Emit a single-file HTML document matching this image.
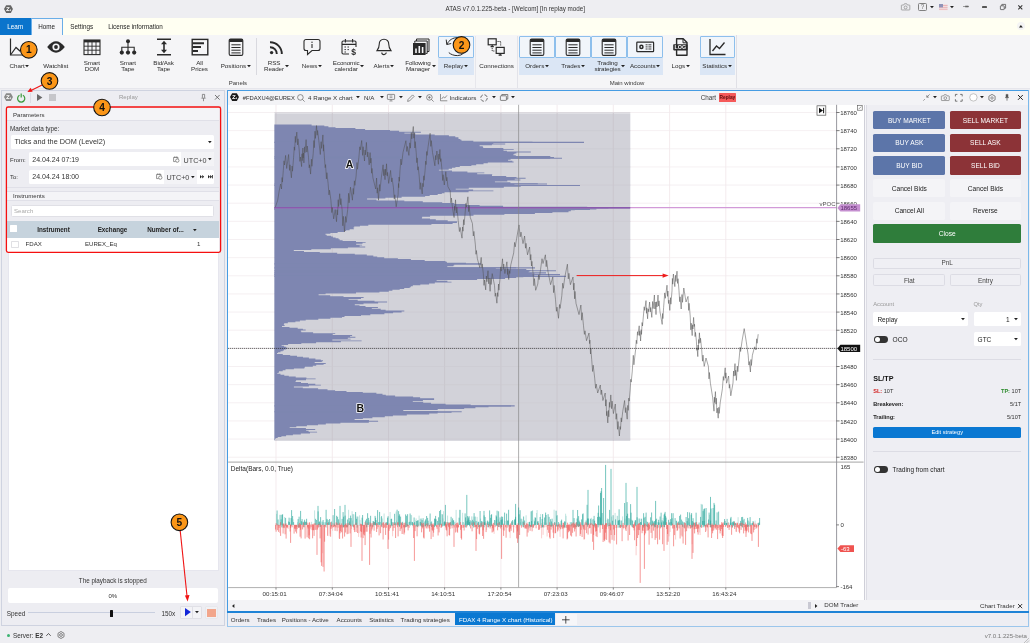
<!DOCTYPE html><html><head><meta charset="utf-8"><title>ATAS</title><style>*{box-sizing:border-box;margin:0;padding:0}
html,body{width:1030px;height:643px;overflow:hidden;background:#eeeef2;font-family:"Liberation Sans",sans-serif;font-size:6.2px;color:#222}
.a{position:absolute}
svg{overflow:visible}
</style></head><body><div id="root" style="position:absolute;left:0;top:0;width:1030px;height:643px;will-change:transform">
<div class="a " style="left:0.0px;top:0.0px;width:1030.0px;height:17.5px;background:#eeeef2"></div>
<svg class="a" style="left:4.12px;top:4.71px;" width="8.969999999999999" height="8.19" viewBox="0 0 9.2 8.4"><path d="M0 4.2L2.2 0.3H7L9.2 4.2L7 8.1H2.2Z" fill="#666"/><circle cx="4.6" cy="4.2" r="2.9" fill="#666"/><path d="M2.5 2.7h2.9l-2.9 3h2.9" fill="none" stroke="#fff" stroke-width="0.9"/><path d="M5.6 5.9l0.9-1.9l0.9 1.9z" fill="#fff"/></svg>
<div class="a" style="top:5.49px;height:8.82px;line-height:8.82px;font-size:6.3px;color:#333;white-space:pre;left:365.30px;width:300px;text-align:center;">ATAS v7.0.1.225-beta - [Welcom] [In replay mode]</div>
<svg class="a" style="left:900.70px;top:3.32px;" width="9.200000000000001" height="7.36" viewBox="0 0 10 8"><path d="M1 2.2 h2 l0.8 -1.4 h2.4 l0.8 1.4 h2 a0.6 0.6 0 0 1 0.6 0.6 v4.2 a0.6 0.6 0 0 1 -0.6 0.6 h-8 a0.6 0.6 0 0 1 -0.6 -0.6 v-4.2 a0.6 0.6 0 0 1 0.6 -0.6z" fill="none" stroke="#808080" stroke-width="0.7"/><circle cx="5" cy="4.8" r="1.6" fill="none" stroke="#808080" stroke-width="0.7"/></svg>
<div class="a " style="left:918.4px;top:2.6px;width:8.4px;height:8.4px;border:0.8px solid #808080;border-radius:1.4px"></div>
<div class="a" style="top:2.59px;height:8.82px;line-height:8.82px;font-size:6.3px;color:#666;white-space:pre;left:917.60px;width:10px;text-align:center;">?</div>
<svg class="a" style="left:929.54px;top:5.75px;" width="3.9099999999999997" height="2.3" viewBox="0 0 3.9099999999999997 2.3"><path d="M0 0 h3.9099999999999997 l-1.9549999999999998 2.3z" fill="#222"/></svg>
<svg class="a" style="left:939.00px;top:3.60px;" width="8.6" height="6.6" viewBox="0 0 8.6 6.6"><rect width="8.6" height="6.6" fill="#f3e9ea"/><path d="M0 1.4h8.6M0 3.3h8.6M0 5.2h8.6" stroke="#e6a8ae" stroke-width="0.9"/><rect width="4" height="3.4" fill="#8f93b8"/></svg>
<svg class="a" style="left:950.04px;top:5.75px;" width="3.9099999999999997" height="2.3" viewBox="0 0 3.9099999999999997 2.3"><path d="M0 0 h3.9099999999999997 l-1.9549999999999998 2.3z" fill="#222"/></svg>
<svg class="a" style="left:963.40px;top:5.30px;" width="6" height="3" viewBox="0 0 6 3"><path d="M0 1.5 h6" stroke="#888" stroke-width="0.8"/><path d="M2.2 1.5h3.2" stroke="#666" stroke-width="1.6"/></svg>
<div class="a " style="left:981.9px;top:6.0px;width:5.6px;height:1.6px;background:#555;border-radius:0.4px"></div>
<svg class="a" style="left:1000.00px;top:3.90px;" width="6" height="6" viewBox="0 0 6 6"><rect x="0.4" y="1.8" width="3.8" height="3.8" rx="0.4" fill="none" stroke="#555" stroke-width="0.8"/><path d="M1.8 1.8 v-1.4 h3.8 v3.8 h-1.4" fill="none" stroke="#555" stroke-width="0.8"/></svg>
<svg class="a" style="left:1018.40px;top:4.50px;" width="4.6" height="4.6" viewBox="0 0 4.6 4.6"><path d="M0.3 0.3 L4.3 4.3 M4.3 0.3 L0.3 4.3" stroke="#333" stroke-width="1.05"/></svg>
<div class="a " style="left:0.0px;top:17.5px;width:1030.0px;height:17.3px;background:#fffff2"></div>
<div class="a " style="left:0.0px;top:17.5px;width:30.7px;height:17.3px;background:#0a74cc"></div>
<div class="a" style="top:23.09px;height:8.82px;line-height:8.82px;font-size:6.3px;color:#fff;white-space:pre;left:-4.70px;width:40px;text-align:center;">Learn</div>
<div class="a " style="left:31.0px;top:17.8px;width:32.0px;height:17.2px;background:#f6f6f8;border:0.8px solid #6aaee8;border-bottom:none"></div>
<div class="a" style="top:23.29px;height:8.82px;line-height:8.82px;font-size:6.3px;color:#222;white-space:pre;left:26.60px;width:40px;text-align:center;">Home</div>
<div class="a" style="top:23.29px;height:8.82px;line-height:8.82px;font-size:6.3px;color:#222;white-space:pre;left:70.30px;">Settings</div>
<div class="a" style="top:23.29px;height:8.82px;line-height:8.82px;font-size:6.3px;color:#222;white-space:pre;left:108.20px;">License information</div>
<div class="a " style="left:1016.8px;top:21.8px;width:8.6px;height:8.6px;background:#f4f4f4;border-radius:50%"></div>
<svg class="a" style="left:1019.20px;top:24.80px;" width="3.8" height="2.4" viewBox="0 0 3.8 2.4"><path d="M0 2.4 h3.8 l-1.9 -2.4z" fill="#222"/></svg>
<div class="a " style="left:0.0px;top:34.8px;width:1030.0px;height:53.6px;background:#f5f5f7"></div>
<div class="a " style="left:0.0px;top:88.2px;width:1030.0px;height:0.8px;background:#e6e6ec"></div>
<div class="a " style="left:255.5px;top:38.0px;width:0.9px;height:37.0px;background:#d9d9df"></div>
<div class="a " style="left:475.0px;top:36.0px;width:0.9px;height:52.0px;background:#e7e7ec"></div>
<div class="a " style="left:517.0px;top:36.0px;width:0.9px;height:52.0px;background:#e3e3e9"></div>
<div class="a " style="left:736.4px;top:35.0px;width:0.9px;height:53.0px;background:#e0e0e6"></div>
<div class="a" style="top:78.70px;height:8.40px;line-height:8.40px;font-size:6px;color:#3a3a3a;white-space:pre;left:207.90px;width:60px;text-align:center;">Panels</div>
<div class="a" style="top:78.70px;height:8.40px;line-height:8.40px;font-size:6px;color:#3a3a3a;white-space:pre;left:587.00px;width:80px;text-align:center;">Main window</div>
<div class="a " style="left:438.4px;top:57.6px;width:35.6px;height:17.8px;background:#dbe6f5"></div>
<div class="a " style="left:438.4px;top:36.4px;width:35.6px;height:21.4px;background:#f1f5fa;border:1px solid #8dbfec;border-radius:1px"></div>
<div class="a " style="left:519.4px;top:57.6px;width:35.5px;height:17.8px;background:#dbe6f5"></div>
<div class="a " style="left:519.4px;top:36.4px;width:35.5px;height:21.4px;background:#f1f5fa;border:1px solid #8dbfec;border-radius:1px"></div>
<div class="a " style="left:554.9px;top:57.6px;width:36.0px;height:17.8px;background:#dbe6f5"></div>
<div class="a " style="left:554.9px;top:36.4px;width:36.0px;height:21.4px;background:#f1f5fa;border:1px solid #8dbfec;border-radius:1px"></div>
<div class="a " style="left:590.9px;top:57.6px;width:36.1px;height:17.8px;background:#dbe6f5"></div>
<div class="a " style="left:590.9px;top:36.4px;width:36.1px;height:21.4px;background:#f1f5fa;border:1px solid #8dbfec;border-radius:1px"></div>
<div class="a " style="left:627.0px;top:57.6px;width:35.9px;height:17.8px;background:#dbe6f5"></div>
<div class="a " style="left:627.0px;top:36.4px;width:35.9px;height:21.4px;background:#f1f5fa;border:1px solid #8dbfec;border-radius:1px"></div>
<div class="a " style="left:699.5px;top:57.6px;width:35.4px;height:17.8px;background:#dbe6f5"></div>
<div class="a " style="left:699.5px;top:36.4px;width:35.4px;height:21.4px;background:#f1f5fa;border:1px solid #8dbfec;border-radius:1px"></div>
<svg class="a" style="left:9.00px;top:37.60px;" width="18" height="18" viewBox="0 0 18 18"><path d="M1.5 0.5 V17 H18" fill="none" stroke="#2a2a2a" stroke-width="1.2"/><path d="M1.5 17 L7 9.5 L11 13 L17 5" fill="none" stroke="#2a2a2a" stroke-width="1.2"/></svg>
<div class="a" style="top:61.92px;height:8.75px;line-height:8.75px;font-size:6.25px;color:#2c2c2c;white-space:pre;left:-10.60px;width:60px;text-align:center;">Chart<svg width="4" height="2.3" viewBox="0 0 3.4 2" style="display:inline-block;vertical-align:middle;margin-left:0.5px;position:relative;top:-0.2px"><path d="M0 0h3.4l-1.7 2z" fill="#222"/></svg></div>
<svg class="a" style="left:47.00px;top:37.60px;" width="18" height="18" viewBox="0 0 18 18"><path d="M0.2 9 Q9 -2.4 17.8 9 Q9 20.4 0.2 9Z" fill="#2a2a2a"/><circle cx="9" cy="9" r="3.6" fill="#f5f5f7"/><circle cx="9" cy="9" r="1.9" fill="#2a2a2a"/></svg>
<div class="a" style="top:61.92px;height:8.75px;line-height:8.75px;font-size:6.25px;color:#2c2c2c;white-space:pre;left:25.80px;width:60px;text-align:center;">Watchlist</div>
<svg class="a" style="left:83.00px;top:37.60px;" width="18" height="18" viewBox="0 0 18 18"><rect x="1" y="2" width="16" height="14.6" fill="none" stroke="#2a2a2a" stroke-width="1.1"/><rect x="1" y="2" width="16" height="2.4" fill="#2a2a2a"/><path d="M1 8.2h16M1 12.2h16M5 4v12.6M9 4v12.6M13 4v12.6" stroke="#2a2a2a" stroke-width="0.9"/></svg>
<div class="a" style="top:58.62px;height:8.75px;line-height:8.75px;font-size:6.25px;color:#2c2c2c;white-space:pre;left:61.90px;width:60px;text-align:center;letter-spacing:-0.1px;">Smart</div>
<div class="a" style="top:64.92px;height:8.75px;line-height:8.75px;font-size:6.25px;color:#2c2c2c;white-space:pre;left:61.90px;width:60px;text-align:center;letter-spacing:-0.1px;">DOM</div>
<svg class="a" style="left:119.00px;top:37.60px;" width="18" height="18" viewBox="0 0 18 18"><circle cx="9" cy="3.2" r="2" fill="#2a2a2a"/><path d="M9 5v9M2.8 13V9.2h12.4V13" fill="none" stroke="#2a2a2a" stroke-width="1.1"/><circle cx="2.8" cy="14.6" r="2.1" fill="#2a2a2a"/><circle cx="9" cy="14.6" r="2.1" fill="#2a2a2a"/><circle cx="15.2" cy="14.6" r="2.1" fill="#2a2a2a"/></svg>
<div class="a" style="top:58.62px;height:8.75px;line-height:8.75px;font-size:6.25px;color:#2c2c2c;white-space:pre;left:97.80px;width:60px;text-align:center;letter-spacing:-0.1px;">Smart</div>
<div class="a" style="top:64.92px;height:8.75px;line-height:8.75px;font-size:6.25px;color:#2c2c2c;white-space:pre;left:97.80px;width:60px;text-align:center;letter-spacing:-0.1px;">Tape</div>
<svg class="a" style="left:154.60px;top:37.60px;" width="18" height="18" viewBox="0 0 18 18"><path d="M2 1.2h14M2 16.8h14" stroke="#2a2a2a" stroke-width="1.6"/><path d="M9 4.5v9" stroke="#2a2a2a" stroke-width="1.6"/><path d="M9 2.8l3 3.4h-6zM9 15.2l3-3.4h-6z" fill="#2a2a2a"/></svg>
<div class="a" style="top:58.62px;height:8.75px;line-height:8.75px;font-size:6.25px;color:#2c2c2c;white-space:pre;left:133.60px;width:60px;text-align:center;letter-spacing:-0.1px;">Bid/Ask</div>
<div class="a" style="top:64.92px;height:8.75px;line-height:8.75px;font-size:6.25px;color:#2c2c2c;white-space:pre;left:133.60px;width:60px;text-align:center;letter-spacing:-0.1px;">Tape</div>
<svg class="a" style="left:190.50px;top:37.60px;" width="18" height="18" viewBox="0 0 18 18"><rect x="1.2" y="1.4" width="15.6" height="15.4" fill="none" stroke="#2a2a2a" stroke-width="1.4"/><path d="M1.6 5.2h11.4M1.6 9.1h8.4M1.6 13h5.4" stroke="#2a2a2a" stroke-width="2"/></svg>
<div class="a" style="top:58.62px;height:8.75px;line-height:8.75px;font-size:6.25px;color:#2c2c2c;white-space:pre;left:169.50px;width:60px;text-align:center;letter-spacing:-0.1px;">All</div>
<div class="a" style="top:64.92px;height:8.75px;line-height:8.75px;font-size:6.25px;color:#2c2c2c;white-space:pre;left:169.50px;width:60px;text-align:center;letter-spacing:-0.1px;">Prices</div>
<svg class="a" style="left:227.00px;top:37.60px;" width="18" height="18" viewBox="0 0 18 18"><rect x="2.2" y="1" width="13.6" height="16.4" rx="1.4" fill="none" stroke="#2a2a2a" stroke-width="1.1"/><path d="M2.2 2.4 a1.4 1.4 0 0 1 1.4 -1.4 h10.8 a1.4 1.4 0 0 1 1.4 1.4 v1.6 h-13.6z" fill="#2a2a2a"/><path d="M4.4 6.8h9.2M4.4 9.5h9.2M4.4 12.2h9.2M4.4 14.9h9.2" stroke="#2a2a2a" stroke-width="1"/></svg>
<div class="a" style="top:61.92px;height:8.75px;line-height:8.75px;font-size:6.25px;color:#2c2c2c;white-space:pre;left:205.60px;width:60px;text-align:center;">Positions<svg width="4" height="2.3" viewBox="0 0 3.4 2" style="display:inline-block;vertical-align:middle;margin-left:0.5px;position:relative;top:-0.2px"><path d="M0 0h3.4l-1.7 2z" fill="#222"/></svg></div>
<svg class="a" style="left:267.00px;top:37.60px;" width="18" height="18" viewBox="0 0 18 18"><circle cx="4.6" cy="14.6" r="1.7" fill="#2a2a2a"/><path d="M3 9.2 a6.6 6.6 0 0 1 6.8 6.8 M3 4.2 a11.6 11.6 0 0 1 11.8 11.8" fill="none" stroke="#2a2a2a" stroke-width="1.9"/></svg>
<div class="a" style="top:58.62px;height:8.75px;line-height:8.75px;font-size:6.25px;color:#2c2c2c;white-space:pre;left:244.00px;width:60px;text-align:center;letter-spacing:-0.1px;">RSS</div>
<div class="a" style="top:64.92px;height:8.75px;line-height:8.75px;font-size:6.25px;color:#2c2c2c;white-space:pre;left:244.00px;width:60px;text-align:center;letter-spacing:-0.1px;">Reader</div>
<svg class="a" style="left:303.40px;top:37.60px;" width="18" height="18" viewBox="0 0 18 18"><path d="M3 1.5h12a2 2 0 0 1 2 2v7a2 2 0 0 1-2 2H9l-4.5 4v-4H3a2 2 0 0 1-2-2v-7a2 2 0 0 1 2-2z" fill="none" stroke="#2a2a2a" stroke-width="1.1"/><path d="M9 6v4" stroke="#2a2a2a" stroke-width="1.1"/><circle cx="9" cy="4.2" r="0.7" fill="#2a2a2a"/></svg>
<div class="a" style="top:61.92px;height:8.75px;line-height:8.75px;font-size:6.25px;color:#2c2c2c;white-space:pre;left:281.90px;width:60px;text-align:center;">News<svg width="4" height="2.3" viewBox="0 0 3.4 2" style="display:inline-block;vertical-align:middle;margin-left:0.5px;position:relative;top:-0.2px"><path d="M0 0h3.4l-1.7 2z" fill="#222"/></svg></div>
<svg class="a" style="left:339.50px;top:37.60px;" width="18" height="18" viewBox="0 0 18 18"><path d="M16 9V4.2a1.2 1.2 0 0 0-1.2-1.2H3.2A1.2 1.2 0 0 0 2 4.2v10.600000000000001a1.2 1.2 0 0 0 1.2 1.2H9" fill="none" stroke="#2a2a2a" stroke-width="1.1"/><path d="M2 6.4h14M5.4 1v3.4M12.6 1v3.4" stroke="#2a2a2a" stroke-width="1.1"/><path d="M4.5 9h1.4M7.5 9h1.4M4.5 11.600000000000001h1.4M7.5 11.600000000000001h1.4M4.5 14h1.4" stroke="#2a2a2a" stroke-width="1"/><text x="13.6" y="16.6" font-size="8.5" font-weight="bold" text-anchor="middle" fill="#2a2a2a" font-family="Liberation Sans, sans-serif">$</text></svg>
<div class="a" style="top:58.62px;height:8.75px;line-height:8.75px;font-size:6.25px;color:#2c2c2c;white-space:pre;left:316.20px;width:60px;text-align:center;letter-spacing:-0.1px;">Economic</div>
<div class="a" style="top:64.92px;height:8.75px;line-height:8.75px;font-size:6.25px;color:#2c2c2c;white-space:pre;left:316.20px;width:60px;text-align:center;letter-spacing:-0.1px;">calendar</div>
<svg class="a" style="left:374.80px;top:37.60px;" width="18" height="18" viewBox="0 0 18 18"><path d="M9 1.2c-3 0-4.800000000000001 2.2-4.800000000000001 5.2 0 3.4-1 4.6-2.2 6.2h14c-1.2-1.6-2.2-2.8-2.2-6.2 0-3-1.8-5.2-4.800000000000001-5.2z" fill="none" stroke="#2a2a2a" stroke-width="1.1"/><path d="M6.8 14.4a2.2 2.2 0 0 0 4.4 0" fill="none" stroke="#2a2a2a" stroke-width="1.1"/></svg>
<div class="a" style="top:61.92px;height:8.75px;line-height:8.75px;font-size:6.25px;color:#2c2c2c;white-space:pre;left:353.80px;width:60px;text-align:center;">Alerts<svg width="4" height="2.3" viewBox="0 0 3.4 2" style="display:inline-block;vertical-align:middle;margin-left:0.5px;position:relative;top:-0.2px"><path d="M0 0h3.4l-1.7 2z" fill="#222"/></svg></div>
<svg class="a" style="left:411.50px;top:37.60px;" width="18" height="18" viewBox="0 0 18 18"><path d="M4.5 3V1h12.5v12.5h-2" fill="none" stroke="#2a2a2a" stroke-width="1"/><path d="M2.800000000000001 4.800000000000001V3h12.4v12.4h-1.8" fill="none" stroke="#2a2a2a" stroke-width="1"/><rect x="1" y="5" width="12.6" height="12" fill="#2a2a2a"/><path d="M4 15v-4.5M7.3 15V8M10.600000000000001 15v-6" stroke="#f5f5f7" stroke-width="1.6"/></svg>
<div class="a" style="top:58.62px;height:8.75px;line-height:8.75px;font-size:6.25px;color:#2c2c2c;white-space:pre;left:388.00px;width:60px;text-align:center;letter-spacing:-0.1px;">Following</div>
<div class="a" style="top:64.92px;height:8.75px;line-height:8.75px;font-size:6.25px;color:#2c2c2c;white-space:pre;left:388.00px;width:60px;text-align:center;letter-spacing:-0.1px;">Manager</div>
<svg class="a" style="left:447.50px;top:37.60px;" width="18" height="18" viewBox="0 0 18 18"></svg>
<div class="a" style="top:61.92px;height:8.75px;line-height:8.75px;font-size:6.25px;color:#2c2c2c;white-space:pre;left:425.80px;width:60px;text-align:center;">Replay<svg width="4" height="2.3" viewBox="0 0 3.4 2" style="display:inline-block;vertical-align:middle;margin-left:0.5px;position:relative;top:-0.2px"><path d="M0 0h3.4l-1.7 2z" fill="#222"/></svg></div>
<svg class="a" style="left:487.20px;top:37.60px;" width="18" height="18" viewBox="0 0 18 18"><rect x="1.2" y="0.8" width="8" height="6" fill="none" stroke="#2a2a2a" stroke-width="1.2"/><path d="M3.6 8.6h3.2M5.2 6.8v1.8" stroke="#2a2a2a" stroke-width="1.2"/><rect x="9.2" y="9.4" width="8" height="6" fill="none" stroke="#2a2a2a" stroke-width="1.2"/><path d="M11.6 17.2h3.2M13.2 15.4v1.8" stroke="#2a2a2a" stroke-width="1.2"/><path d="M10.5 3.5h3.2v4.6M5.2 10v3h2.6" fill="none" stroke="#2a2a2a" stroke-width="0.9" stroke-dasharray="1.2 0.8"/></svg>
<div class="a" style="top:61.92px;height:8.75px;line-height:8.75px;font-size:6.25px;color:#2c2c2c;white-space:pre;left:466.60px;width:60px;text-align:center;">Connections</div>
<svg class="a" style="left:528.00px;top:37.60px;" width="18" height="18" viewBox="0 0 18 18"><rect x="2.2" y="1" width="13.6" height="16.4" rx="1.4" fill="none" stroke="#2a2a2a" stroke-width="1.1"/><path d="M2.2 2.4 a1.4 1.4 0 0 1 1.4 -1.4 h10.8 a1.4 1.4 0 0 1 1.4 1.4 v1.6 h-13.6z" fill="#2a2a2a"/><path d="M4.4 6.8h9.2M4.4 9.5h9.2M4.4 12.2h9.2M4.4 14.9h9.2" stroke="#2a2a2a" stroke-width="1"/></svg>
<div class="a" style="top:61.92px;height:8.75px;line-height:8.75px;font-size:6.25px;color:#2c2c2c;white-space:pre;left:507.00px;width:60px;text-align:center;">Orders<svg width="4" height="2.3" viewBox="0 0 3.4 2" style="display:inline-block;vertical-align:middle;margin-left:0.5px;position:relative;top:-0.2px"><path d="M0 0h3.4l-1.7 2z" fill="#222"/></svg></div>
<svg class="a" style="left:564.00px;top:37.60px;" width="18" height="18" viewBox="0 0 18 18"><rect x="2.2" y="1" width="13.6" height="16.4" rx="1.4" fill="none" stroke="#2a2a2a" stroke-width="1.1"/><path d="M2.2 2.4 a1.4 1.4 0 0 1 1.4 -1.4 h10.8 a1.4 1.4 0 0 1 1.4 1.4 v1.6 h-13.6z" fill="#2a2a2a"/><path d="M4.4 6.8h9.2M4.4 9.5h9.2M4.4 12.2h9.2M4.4 14.9h9.2" stroke="#2a2a2a" stroke-width="1"/></svg>
<div class="a" style="top:61.92px;height:8.75px;line-height:8.75px;font-size:6.25px;color:#2c2c2c;white-space:pre;left:543.00px;width:60px;text-align:center;">Trades<svg width="4" height="2.3" viewBox="0 0 3.4 2" style="display:inline-block;vertical-align:middle;margin-left:0.5px;position:relative;top:-0.2px"><path d="M0 0h3.4l-1.7 2z" fill="#222"/></svg></div>
<svg class="a" style="left:600.00px;top:37.60px;" width="18" height="18" viewBox="0 0 18 18"><rect x="2.2" y="1" width="13.6" height="16.4" rx="1.4" fill="none" stroke="#2a2a2a" stroke-width="1.1"/><path d="M2.2 2.4 a1.4 1.4 0 0 1 1.4 -1.4 h10.8 a1.4 1.4 0 0 1 1.4 1.4 v1.6 h-13.6z" fill="#2a2a2a"/><path d="M4.4 6.8h9.2M4.4 9.5h9.2M4.4 12.2h9.2M4.4 14.9h9.2" stroke="#2a2a2a" stroke-width="1"/></svg>
<div class="a" style="top:58.62px;height:8.75px;line-height:8.75px;font-size:6.25px;color:#2c2c2c;white-space:pre;left:577.50px;width:60px;text-align:center;letter-spacing:-0.1px;">Trading</div>
<div class="a" style="top:64.92px;height:8.75px;line-height:8.75px;font-size:6.25px;color:#2c2c2c;white-space:pre;left:577.50px;width:60px;text-align:center;letter-spacing:-0.1px;">strategies</div>
<svg class="a" style="left:636.00px;top:37.60px;" width="18" height="18" viewBox="0 0 18 18"><rect x="0.8" y="4.2" width="16.8" height="9.4" rx="0.6" fill="none" stroke="#2a2a2a" stroke-width="1.2"/><circle cx="5.4" cy="8.9" r="2.3" fill="#2a2a2a"/><circle cx="5.4" cy="8.9" r="0.8" fill="#f1f5fa"/><path d="M9.6 6.8h2M12.4 6.8h3M9.6 8.9h2M12.4 8.9h3M9.6 11h2M12.4 11h3" stroke="#2a2a2a" stroke-width="0.9"/></svg>
<div class="a" style="top:61.92px;height:8.75px;line-height:8.75px;font-size:6.25px;color:#2c2c2c;white-space:pre;left:615.00px;width:60px;text-align:center;">Accounts<svg width="4" height="2.3" viewBox="0 0 3.4 2" style="display:inline-block;vertical-align:middle;margin-left:0.5px;position:relative;top:-0.2px"><path d="M0 0h3.4l-1.7 2z" fill="#222"/></svg></div>
<svg class="a" style="left:671.60px;top:37.60px;" width="18" height="18" viewBox="0 0 18 18"><path d="M4.6 0.8h6.6l3.8 3.8v12.6H4.6z" fill="#f5f5f7" stroke="#2a2a2a" stroke-width="1.4" stroke-linejoin="round"/><path d="M11 0.8v4h4" fill="none" stroke="#2a2a2a" stroke-width="1"/><rect x="1.2" y="6.2" width="14.4" height="6.2" rx="0.8" fill="#2a2a2a"/><text x="8.4" y="11.2" font-size="5.4" font-weight="bold" text-anchor="middle" fill="#f5f5f7" font-family="Liberation Sans, sans-serif">LOG</text></svg>
<div class="a" style="top:61.92px;height:8.75px;line-height:8.75px;font-size:6.25px;color:#2c2c2c;white-space:pre;left:650.60px;width:60px;text-align:center;">Logs<svg width="4" height="2.3" viewBox="0 0 3.4 2" style="display:inline-block;vertical-align:middle;margin-left:0.5px;position:relative;top:-0.2px"><path d="M0 0h3.4l-1.7 2z" fill="#222"/></svg></div>
<svg class="a" style="left:708.00px;top:37.60px;" width="18" height="18" viewBox="0 0 18 18"><path d="M2 1V16.5H17.5" fill="none" stroke="#2a2a2a" stroke-width="1.3"/><path d="M4.5 13l4-5 3 2.5 5-6" fill="none" stroke="#2a2a2a" stroke-width="1.3"/></svg>
<div class="a" style="top:61.92px;height:8.75px;line-height:8.75px;font-size:6.25px;color:#2c2c2c;white-space:pre;left:687.00px;width:60px;text-align:center;">Statistics<svg width="4" height="2.3" viewBox="0 0 3.4 2" style="display:inline-block;vertical-align:middle;margin-left:0.5px;position:relative;top:-0.2px"><path d="M0 0h3.4l-1.7 2z" fill="#222"/></svg></div>
<svg class="a" style="left:284.70px;top:65.20px;" width="4" height="2.3" viewBox="0 0 4 2.3"><path d="M0 0h4l-2 2.3z" fill="#222"/></svg>
<svg class="a" style="left:359.90px;top:65.20px;" width="4" height="2.3" viewBox="0 0 4 2.3"><path d="M0 0h4l-2 2.3z" fill="#222"/></svg>
<svg class="a" style="left:432.40px;top:65.20px;" width="4" height="2.3" viewBox="0 0 4 2.3"><path d="M0 0h4l-2 2.3z" fill="#222"/></svg>
<svg class="a" style="left:621.20px;top:65.20px;" width="4" height="2.3" viewBox="0 0 4 2.3"><path d="M0 0h4l-2 2.3z" fill="#222"/></svg>
<svg class="a" style="left:0.00px;top:0.00px;" width="1030" height="643" viewBox="0 0 1030 643"><path d="M446.8 44.4C449 40 453 37.6 457.5 37.6A9 9 0 0 1 457.5 55.6C454 55.6 451 54.6 448.8 52.6" fill="none" stroke="#2a2a2a" stroke-width="1"/><path d="M446.2 39.6L446.8 44.5L451.2 43.5" fill="none" stroke="#2a2a2a" stroke-width="1"/></svg>
<div class="a " style="left:1.3px;top:89.6px;width:223.6px;height:536.4px;background:#ededf2;border:0.9px solid #cfd3e0;"></div>
<svg class="a" style="left:3.71px;top:93.31px;" width="8.969999999999999" height="8.19" viewBox="0 0 9.2 8.4"><path d="M0 4.2L2.2 0.3H7L9.2 4.2L7 8.1H2.2Z" fill="#8a8a8a"/><circle cx="4.6" cy="4.2" r="2.9" fill="#8a8a8a"/><path d="M2.5 2.7h2.9l-2.9 3h2.9" fill="none" stroke="#fff" stroke-width="0.9"/><path d="M5.6 5.9l0.9-1.9l0.9 1.9z" fill="#fff"/></svg>
<svg class="a" style="left:17.20px;top:93.00px;" width="8.4" height="8.8" viewBox="0 0 8.4 8.8"><path d="M2.5 2.3A3.6 3.6 0 1 0 5.9 2.3" fill="none" stroke="#3a9a3a" stroke-width="1.2"/><path d="M4.2 0.4v4.2" stroke="#3a9a3a" stroke-width="1.2"/></svg>
<div class="a " style="left:30.2px;top:92.5px;width:0.8px;height:10.0px;background:#dcdce4"></div>
<svg class="a" style="left:37.00px;top:94.00px;" width="5.4" height="7" viewBox="0 0 5.4 7"><path d="M0 0L5.4 3.5L0 7z" fill="#6a6a6a"/></svg>
<div class="a " style="left:49.4px;top:94.2px;width:6.8px;height:6.4px;background:#c6c6ca"></div>
<div class="a" style="top:93.33px;height:8.54px;line-height:8.54px;font-size:6.1px;color:#999;white-space:pre;left:108.40px;width:40px;text-align:center;">Replay</div>
<svg class="a" style="left:200.50px;top:93.80px;" width="5" height="7.4" viewBox="0 0 5 7.4"><path d="M1.4 0.4h2.2v3l0.8 0.8h-3.800000000000001l0.8-0.8z" fill="none" stroke="#666" stroke-width="0.7"/><path d="M2.5 4.2v3" stroke="#666" stroke-width="0.7"/></svg>
<svg class="a" style="left:215.20px;top:95.30px;" width="4.6" height="4.6" viewBox="0 0 4.6 4.6"><path d="M0 0L4.6 4.6M4.6 0L0 4.6" stroke="#555" stroke-width="0.8"/></svg>
<div class="a " style="left:7.4px;top:107.6px;width:211.2px;height:13.0px;background:#f4f4f7;border-bottom:0.8px solid #e0e0e8"></div>
<div class="a" style="top:111.43px;height:8.54px;line-height:8.54px;font-size:6.1px;color:#333;white-space:pre;left:13.00px;">Parameters</div>
<div class="a" style="top:124.52px;height:8.96px;line-height:8.96px;font-size:6.4px;color:#333;white-space:pre;left:10.00px;">Market data type:</div>
<div class="a " style="left:10.6px;top:135.2px;width:203.8px;height:13.7px;background:#fff;border-radius:1.5px"></div>
<div class="a" style="top:137.39px;height:10.22px;line-height:10.22px;font-size:7.3px;color:#333;white-space:pre;left:14.60px;">Ticks and the DOM (Level2)</div>
<svg class="a" style="left:208.46px;top:141.11px;" width="3.6799999999999997" height="2.1849999999999996" viewBox="0 0 3.6799999999999997 2.1849999999999996"><path d="M0 0 h3.6799999999999997 l-1.8399999999999999 2.1849999999999996z" fill="#222"/></svg>
<div class="a" style="top:155.60px;height:8.40px;line-height:8.40px;font-size:6px;color:#333;white-space:pre;left:10.00px;">From:</div>
<div class="a " style="left:28.8px;top:152.3px;width:185.6px;height:13.8px;background:#fff;border-radius:1.5px"></div>
<div class="a " style="left:181.3px;top:152.3px;width:33.1px;height:13.8px;background:#f3f3f6;border-radius:0 1.5px 1.5px 0"></div>
<div class="a" style="top:154.50px;height:9.80px;line-height:9.80px;font-size:7px;color:#333;white-space:pre;left:32.30px;">24.04.24 07:19</div>
<svg class="a" style="left:173.20px;top:155.60px;" width="6.6" height="6.8" viewBox="0 0 6.6 6.8"><path d="M5 3V1.4H0.6V5.6H2.6" fill="none" stroke="#666" stroke-width="0.7"/><path d="M1.8 0.4v1.6M3.800000000000001 0.4v1.6" stroke="#666" stroke-width="0.7"/><circle cx="4.3" cy="4.6" r="1.7" fill="none" stroke="#666" stroke-width="0.7"/></svg>
<div class="a" style="top:155.76px;height:10.08px;line-height:10.08px;font-size:7.2px;color:#444;white-space:pre;left:183.60px;">UTC+0</div>
<svg class="a" style="left:208.46px;top:158.11px;" width="3.6799999999999997" height="2.1849999999999996" viewBox="0 0 3.6799999999999997 2.1849999999999996"><path d="M0 0 h3.6799999999999997 l-1.8399999999999999 2.1849999999999996z" fill="#222"/></svg>
<div class="a" style="top:172.60px;height:8.40px;line-height:8.40px;font-size:6px;color:#333;white-space:pre;left:10.00px;">To:</div>
<div class="a " style="left:28.8px;top:169.9px;width:185.6px;height:13.9px;background:#fff;border-radius:1.5px"></div>
<div class="a " style="left:164.3px;top:169.9px;width:33.2px;height:13.9px;background:#f3f3f6"></div>
<div class="a" style="top:172.30px;height:9.80px;line-height:9.80px;font-size:7px;color:#333;white-space:pre;left:32.30px;">24.04.24 18:00</div>
<svg class="a" style="left:156.20px;top:173.00px;" width="6.6" height="6.8" viewBox="0 0 6.6 6.8"><path d="M5 3V1.4H0.6V5.6H2.6" fill="none" stroke="#666" stroke-width="0.7"/><path d="M1.8 0.4v1.6M3.800000000000001 0.4v1.6" stroke="#666" stroke-width="0.7"/><circle cx="4.3" cy="4.6" r="1.7" fill="none" stroke="#666" stroke-width="0.7"/></svg>
<div class="a" style="top:172.76px;height:10.08px;line-height:10.08px;font-size:7.2px;color:#444;white-space:pre;left:166.40px;">UTC+0</div>
<svg class="a" style="left:191.46px;top:175.51px;" width="3.6799999999999997" height="2.1849999999999996" viewBox="0 0 3.6799999999999997 2.1849999999999996"><path d="M0 0 h3.6799999999999997 l-1.8399999999999999 2.1849999999999996z" fill="#222"/></svg>
<svg class="a" style="left:200.00px;top:175.00px;" width="4.4" height="3.4" viewBox="0 0 4.4 3.4"><path d="M0 0l2 1.7l-2 1.7zM2.2 0l2 1.7l-2 1.7z" fill="#222"/></svg>
<svg class="a" style="left:207.80px;top:175.00px;" width="5" height="3.4" viewBox="0 0 5 3.4"><path d="M0 0l2 1.7l-2 1.7zM2.1 0l2 1.7l-2 1.7z" fill="#222"/><path d="M4.5 0v3.4" stroke="#222" stroke-width="0.8"/></svg>
<div class="a " style="left:7.4px;top:187.2px;width:211.2px;height:0.8px;background:#e0e0e8"></div>
<div class="a " style="left:7.4px;top:190.8px;width:211.2px;height:10.4px;background:#f4f4f7;border-top:0.8px solid #e0e0e8;border-bottom:0.8px solid #e0e0e8"></div>
<div class="a" style="top:192.03px;height:8.54px;line-height:8.54px;font-size:6.1px;color:#333;white-space:pre;left:13.00px;">Instruments</div>
<div class="a " style="left:11.3px;top:205.4px;width:203.1px;height:11.6px;background:#fff;border:0.7px solid #e0e0e6;border-radius:1.5px"></div>
<div class="a" style="top:207.23px;height:8.54px;line-height:8.54px;font-size:6.1px;color:#aaa;white-space:pre;left:14.00px;">Search</div>
<div class="a " style="left:7.4px;top:220.8px;width:211.2px;height:17.2px;background:#c6d3dd"></div>
<div class="a " style="left:9.8px;top:225.2px;width:7.2px;height:7.0px;background:#fff;border-radius:0.5px"></div>
<div class="a" style="top:226.39px;height:8.82px;line-height:8.82px;font-size:6.3px;color:#222;white-space:pre;font-weight:bold;left:23.50px;width:60px;text-align:center;">Instrument</div>
<div class="a" style="top:226.39px;height:8.82px;line-height:8.82px;font-size:6.3px;color:#222;white-space:pre;font-weight:bold;left:82.50px;width:60px;text-align:center;">Exchange</div>
<div class="a" style="top:226.39px;height:8.82px;line-height:8.82px;font-size:6.3px;color:#222;white-space:pre;font-weight:bold;left:135.50px;width:60px;text-align:center;">Number of...</div>
<svg class="a" style="left:193.36px;top:228.51px;" width="3.6799999999999997" height="2.1849999999999996" viewBox="0 0 3.6799999999999997 2.1849999999999996"><path d="M0 0 h3.6799999999999997 l-1.8399999999999999 2.1849999999999996z" fill="#222"/></svg>
<div class="a " style="left:7.4px;top:238.0px;width:211.2px;height:13.6px;background:#fff"></div>
<div class="a " style="left:10.6px;top:240.7px;width:8.0px;height:7.7px;background:#fff;border:0.7px solid #e0e0e4;border-radius:0.8px"></div>
<div class="a" style="top:239.93px;height:8.54px;line-height:8.54px;font-size:6.1px;color:#333;white-space:pre;left:25.60px;">FDAX</div>
<div class="a" style="top:239.93px;height:8.54px;line-height:8.54px;font-size:6.1px;color:#333;white-space:pre;left:85.00px;">EUREX_Eq</div>
<div class="a" style="top:239.93px;height:8.54px;line-height:8.54px;font-size:6.1px;color:#333;white-space:pre;left:193.60px;width:10px;text-align:center;">1</div>
<div class="a " style="left:7.6px;top:252.6px;width:211.4px;height:318.4px;background:#fff;border:0.6px solid #e6e6ee;border-top:none"></div>
<div class="a" style="top:576.99px;height:8.82px;line-height:8.82px;font-size:6.3px;color:#333;white-space:pre;left:52.80px;width:120px;text-align:center;">The playback is stopped</div>
<div class="a " style="left:7.6px;top:588.0px;width:210.8px;height:14.6px;background:#fff;border-radius:2px"></div>
<div class="a" style="top:592.00px;height:8.40px;line-height:8.40px;font-size:6px;color:#333;white-space:pre;left:97.80px;width:30px;text-align:center;">0%</div>
<div class="a" style="top:609.52px;height:8.96px;line-height:8.96px;font-size:6.4px;color:#333;white-space:pre;left:6.80px;">Speed</div>
<div class="a " style="left:27.6px;top:612.2px;width:127.6px;height:0.8px;background:#c9cfdf"></div>
<div class="a " style="left:110.4px;top:609.7px;width:3.0px;height:6.9px;background:#111;border-radius:0.6px"></div>
<div class="a" style="top:609.52px;height:8.96px;line-height:8.96px;font-size:6.4px;color:#333;white-space:pre;left:161.40px;">150x</div>
<div class="a " style="left:180.4px;top:605.8px;width:21.2px;height:13.6px;background:#f3f3f6;border:0.7px solid #e0e0e6;border-radius:1px"></div>
<div class="a " style="left:192.2px;top:605.8px;width:0.7px;height:13.6px;background:#e0e0e6"></div>
<svg class="a" style="left:185.30px;top:608.40px;" width="5.9" height="8.2" viewBox="0 0 5.9 8.2"><path d="M0 0L5.9 4.1L0 8.2z" fill="#1226d8"/></svg>
<svg class="a" style="left:195.04px;top:611.05px;" width="3.9099999999999997" height="2.3" viewBox="0 0 3.9099999999999997 2.3"><path d="M0 0 h3.9099999999999997 l-1.9549999999999998 2.3z" fill="#222"/></svg>
<div class="a " style="left:205.0px;top:605.8px;width:13.3px;height:13.6px;background:#f1f1f4;border:0.7px solid #e8e8ec;border-radius:1px"></div>
<div class="a " style="left:207.1px;top:608.8px;width:8.6px;height:8.1px;background:#f2a68c"></div>
<div class="a " style="left:6.8px;top:633.6px;width:3.2px;height:3.2px;background:#3cb371;border-radius:50%"></div>
<div class="a" style="top:631.52px;height:8.96px;line-height:8.96px;font-size:6.4px;color:#333;white-space:pre;left:12.90px;">Server: <b>E2</b></div>
<svg class="a" style="left:46.00px;top:633.40px;" width="5" height="3" viewBox="0 0 5 3"><path d="M0.3 2.8L2.5 0.5L4.7 2.8" fill="none" stroke="#333" stroke-width="0.8"/></svg>
<svg class="a" style="left:56.70px;top:631.20px;" width="8" height="8" viewBox="0 0 8 8"><path d="M4 0.5l3 1.75v3.5L4 7.5l-3-1.75v-3.5z" fill="none" stroke="#555" stroke-width="0.7"/><circle cx="4" cy="4" r="1.4" fill="none" stroke="#555" stroke-width="0.7"/></svg>
<div class="a" style="top:631.53px;height:8.54px;line-height:8.54px;font-size:6.1px;color:#777;white-space:pre;left:947.00px;width:80px;text-align:right;">v7.0.1.225-beta</div>
<svg class="a" style="left:1023.50px;top:637.50px;" width="5" height="5" viewBox="0 0 5 5"><path d="M5 0L0 5M5 2.5L2.5 5" stroke="#aaa" stroke-width="0.7"/></svg>
<div class="a " style="left:226.6px;top:89.8px;width:802.0px;height:523.2px;border:1.7px solid #469ce3;border-right:1.3px solid #7ab8ea;border-radius:1px;background:#fff"></div>
<div class="a " style="left:228.2px;top:91.0px;width:799.4px;height:13.8px;background:#f3f3f6"></div>
<svg class="a" style="left:229.51px;top:93.41px;" width="8.969999999999999" height="8.19" viewBox="0 0 9.2 8.4"><path d="M0 4.2L2.2 0.3H7L9.2 4.2L7 8.1H2.2Z" fill="#1a1a1a"/><circle cx="4.6" cy="4.2" r="2.9" fill="#1a1a1a"/><path d="M2.5 2.7h2.9l-2.9 3h2.9" fill="none" stroke="#fff" stroke-width="0.9"/><path d="M5.6 5.9l0.9-1.9l0.9 1.9z" fill="#fff"/></svg>
<div class="a" style="top:93.74px;height:8.12px;line-height:8.12px;font-size:5.8px;color:#333;white-space:pre;left:242.80px;">#FDAXU4@EUREX</div>
<svg class="a" style="left:297.00px;top:93.60px;" width="8" height="8" viewBox="0 0 8 8"><circle cx="3.4" cy="3.4" r="2.8" fill="none" stroke="#666" stroke-width="0.7"/><path d="M5.4 5.4L7.6 7.6" stroke="#666" stroke-width="0.7"/></svg>
<div class="a" style="top:93.96px;height:8.68px;line-height:8.68px;font-size:6.2px;color:#333;white-space:pre;left:308.00px;">4 Range X chart</div>
<svg class="a" style="left:356.05px;top:96.45px;" width="3.9099999999999997" height="2.3" viewBox="0 0 3.9099999999999997 2.3"><path d="M0 0 h3.9099999999999997 l-1.9549999999999998 2.3z" fill="#222"/></svg>
<div class="a" style="top:93.96px;height:8.68px;line-height:8.68px;font-size:6.2px;color:#333;white-space:pre;left:364.00px;">N/A</div>
<svg class="a" style="left:379.55px;top:96.45px;" width="3.9099999999999997" height="2.3" viewBox="0 0 3.9099999999999997 2.3"><path d="M0 0 h3.9099999999999997 l-1.9549999999999998 2.3z" fill="#222"/></svg>
<svg class="a" style="left:386.60px;top:93.80px;" width="8" height="7.4" viewBox="0 0 8 7.4"><rect x="0.4" y="0.4" width="7.2" height="5" rx="0.5" fill="none" stroke="#666" stroke-width="0.7"/><path d="M2.4 7h3.2M4 5.4V7M2.6 2h2.800000000000001M2.6 3.4h2.8" stroke="#666" stroke-width="0.6"/></svg>
<svg class="a" style="left:398.65px;top:96.45px;" width="3.9099999999999997" height="2.3" viewBox="0 0 3.9099999999999997 2.3"><path d="M0 0 h3.9099999999999997 l-1.9549999999999998 2.3z" fill="#222"/></svg>
<svg class="a" style="left:406.60px;top:93.60px;" width="8" height="8" viewBox="0 0 8 8"><path d="M0.6 7.4l0.5-2L5.6 0.9l1.5 1.5L2.6 6.9z" fill="none" stroke="#666" stroke-width="0.7"/></svg>
<svg class="a" style="left:417.75px;top:96.45px;" width="3.9099999999999997" height="2.3" viewBox="0 0 3.9099999999999997 2.3"><path d="M0 0 h3.9099999999999997 l-1.9549999999999998 2.3z" fill="#222"/></svg>
<svg class="a" style="left:425.60px;top:93.60px;" width="8" height="8" viewBox="0 0 8 8"><circle cx="3.4" cy="3.4" r="2.8" fill="none" stroke="#666" stroke-width="0.7"/><path d="M5.4 5.4L7.6 7.6M2 3.4h2.8M3.4 2v2.8" stroke="#666" stroke-width="0.7"/></svg>
<svg class="a" style="left:439.60px;top:94.00px;" width="7.4" height="7.4" viewBox="0 0 7.4 7.4"><path d="M0.5 0v6.800000000000001h6.8" fill="none" stroke="#666" stroke-width="0.7"/><path d="M1.6 5l1.8-2.2 1.4 1.2 2.2-2.6" fill="none" stroke="#666" stroke-width="0.7"/></svg>
<div class="a" style="top:93.96px;height:8.68px;line-height:8.68px;font-size:6.2px;color:#333;white-space:pre;left:449.60px;">Indicators</div>
<svg class="a" style="left:480.40px;top:93.60px;" width="8" height="8" viewBox="0 0 8 8"><circle cx="4" cy="4" r="3.3" fill="none" stroke="#555" stroke-width="0.8" stroke-dasharray="3.6 1.6"/></svg>
<svg class="a" style="left:492.05px;top:96.45px;" width="3.9099999999999997" height="2.3" viewBox="0 0 3.9099999999999997 2.3"><path d="M0 0 h3.9099999999999997 l-1.9549999999999998 2.3z" fill="#222"/></svg>
<svg class="a" style="left:499.60px;top:94.00px;" width="8.4" height="7" viewBox="0 0 8.4 7"><rect x="0.4" y="1.8" width="6" height="4.6" rx="0.5" fill="none" stroke="#555" stroke-width="0.7"/><path d="M1.8 1.8V0.5h6v4.6h-1.4" fill="none" stroke="#555" stroke-width="0.7"/></svg>
<svg class="a" style="left:511.44px;top:96.45px;" width="3.9099999999999997" height="2.3" viewBox="0 0 3.9099999999999997 2.3"><path d="M0 0 h3.9099999999999997 l-1.9549999999999998 2.3z" fill="#222"/></svg>
<div class="a" style="top:94.49px;height:8.82px;line-height:8.82px;font-size:6.3px;color:#3a3a3a;white-space:pre;left:700.70px;">Chart</div>
<div class="a " style="left:718.9px;top:93.4px;width:17.0px;height:8.4px;background:#f55a5a;border-radius:0.6px"></div>
<div class="a" style="top:95.14px;height:6.72px;line-height:6.72px;font-size:4.8px;color:#5e0c0c;white-space:pre;font-weight:bold;left:717.40px;width:20px;text-align:center;">Replay</div>
<svg class="a" style="left:922.60px;top:94.00px;" width="7" height="7" viewBox="0 0 7 7"><path d="M6.6 0.4L3.800000000000001 3.2M3.8 1.2v2h2M0.4 6.6l1.4-1.4" fill="none" stroke="#666" stroke-width="0.7"/></svg>
<svg class="a" style="left:933.44px;top:96.45px;" width="3.9099999999999997" height="2.3" viewBox="0 0 3.9099999999999997 2.3"><path d="M0 0 h3.9099999999999997 l-1.9549999999999998 2.3z" fill="#222"/></svg>
<svg class="a" style="left:941.00px;top:94.36px;" width="8.6" height="6.88" viewBox="0 0 10 8"><path d="M1 2.2 h2 l0.8 -1.4 h2.4 l0.8 1.4 h2 a0.6 0.6 0 0 1 0.6 0.6 v4.2 a0.6 0.6 0 0 1 -0.6 0.6 h-8 a0.6 0.6 0 0 1 -0.6 -0.6 v-4.2 a0.6 0.6 0 0 1 0.6 -0.6z" fill="none" stroke="#666" stroke-width="0.7"/><circle cx="5" cy="4.8" r="1.6" fill="none" stroke="#666" stroke-width="0.7"/></svg>
<svg class="a" style="left:955.20px;top:93.80px;" width="7.6" height="7.6" viewBox="0 0 7.6 7.6"><path d="M0.4 2.4v-2h2M5.2 0.4h2v2M7.2 5.2v2h-2M2.4 7.2h-2v-2" fill="none" stroke="#555" stroke-width="0.8"/></svg>
<svg class="a" style="left:968.60px;top:93.20px;" width="8.8" height="8.8" viewBox="0 0 8.8 8.8"><circle cx="4.4" cy="4.4" r="3.7" fill="#fff" stroke="#aaa" stroke-width="0.7"/></svg>
<svg class="a" style="left:980.25px;top:96.45px;" width="3.9099999999999997" height="2.3" viewBox="0 0 3.9099999999999997 2.3"><path d="M0 0 h3.9099999999999997 l-1.9549999999999998 2.3z" fill="#222"/></svg>
<svg class="a" style="left:988.00px;top:93.60px;" width="8" height="8" viewBox="0 0 8 8"><path d="M4 0.4l3.1 1.8v3.6L4 7.6l-3.1-1.8v-3.6z" fill="none" stroke="#555" stroke-width="0.7"/><circle cx="4" cy="4" r="1.2" fill="none" stroke="#555" stroke-width="0.6"/></svg>
<svg class="a" style="left:1005.00px;top:94.20px;" width="4" height="7" viewBox="0 0 4 7"><path d="M1 0.4h2v2.6l0.7 0.7h-3.4l0.7-0.7z" fill="#555" stroke="#555" stroke-width="0.5"/><path d="M2 3.7v3" stroke="#555" stroke-width="0.7"/></svg>
<svg class="a" style="left:1018.20px;top:95.20px;" width="4.8" height="4.8" viewBox="0 0 4.8 4.8"><path d="M0 0L4.8 4.8M4.8 0L0 4.8" stroke="#222" stroke-width="1"/></svg>
<svg class="a" style="left:0;top:0" width="1030" height="643" viewBox="0 0 1030 643"><path d="M276 104.8V587.4" stroke="#efe3e6" stroke-width="0.7"/><path d="M332.3 104.8V587.4" stroke="#efe3e6" stroke-width="0.7"/><path d="M388.5 104.8V587.4" stroke="#efe3e6" stroke-width="0.7"/><path d="M444.6 104.8V587.4" stroke="#efe3e6" stroke-width="0.7"/><path d="M500.9 104.8V587.4" stroke="#efe3e6" stroke-width="0.7"/><path d="M557.1 104.8V587.4" stroke="#efe3e6" stroke-width="0.7"/><path d="M613.3 104.8V587.4" stroke="#efe3e6" stroke-width="0.7"/><path d="M669.6 104.8V587.4" stroke="#efe3e6" stroke-width="0.7"/><path d="M725.8 104.8V587.4" stroke="#efe3e6" stroke-width="0.7"/><path d="M228.2 457.24H836.4" stroke="#f1e9ec" stroke-width="0.7"/><path d="M228.2 439.09H836.4" stroke="#f1e9ec" stroke-width="0.7"/><path d="M228.2 420.95H836.4" stroke="#f1e9ec" stroke-width="0.7"/><path d="M228.2 402.80H836.4" stroke="#f1e9ec" stroke-width="0.7"/><path d="M228.2 384.66H836.4" stroke="#f1e9ec" stroke-width="0.7"/><path d="M228.2 366.52H836.4" stroke="#f1e9ec" stroke-width="0.7"/><path d="M228.2 348.37H836.4" stroke="#f1e9ec" stroke-width="0.7"/><path d="M228.2 330.23H836.4" stroke="#f1e9ec" stroke-width="0.7"/><path d="M228.2 312.08H836.4" stroke="#f1e9ec" stroke-width="0.7"/><path d="M228.2 293.94H836.4" stroke="#f1e9ec" stroke-width="0.7"/><path d="M228.2 275.80H836.4" stroke="#f1e9ec" stroke-width="0.7"/><path d="M228.2 257.65H836.4" stroke="#f1e9ec" stroke-width="0.7"/><path d="M228.2 239.51H836.4" stroke="#f1e9ec" stroke-width="0.7"/><path d="M228.2 221.36H836.4" stroke="#f1e9ec" stroke-width="0.7"/><path d="M228.2 203.22H836.4" stroke="#f1e9ec" stroke-width="0.7"/><path d="M228.2 185.08H836.4" stroke="#f1e9ec" stroke-width="0.7"/><path d="M228.2 166.93H836.4" stroke="#f1e9ec" stroke-width="0.7"/><path d="M228.2 148.79H836.4" stroke="#f1e9ec" stroke-width="0.7"/><path d="M228.2 130.64H836.4" stroke="#f1e9ec" stroke-width="0.7"/><path d="M228.2 112.50H836.4" stroke="#f1e9ec" stroke-width="0.7"/><rect x="274.6" y="113.3" width="355.7" height="327.5" fill="#d2d2d9"/><path d="M276 112.9V440.8" stroke="#c7c3ca" stroke-width="0.7"/><path d="M332.3 112.9V440.8" stroke="#c7c3ca" stroke-width="0.7"/><path d="M388.5 112.9V440.8" stroke="#c7c3ca" stroke-width="0.7"/><path d="M444.6 112.9V440.8" stroke="#c7c3ca" stroke-width="0.7"/><path d="M500.9 112.9V440.8" stroke="#c7c3ca" stroke-width="0.7"/><path d="M557.1 112.9V440.8" stroke="#c7c3ca" stroke-width="0.7"/><path d="M613.3 112.9V440.8" stroke="#c7c3ca" stroke-width="0.7"/><path d="M274.4 439.09H630.3" stroke="#cbc9d0" stroke-width="0.6"/><path d="M274.4 420.95H630.3" stroke="#cbc9d0" stroke-width="0.6"/><path d="M274.4 402.80H630.3" stroke="#cbc9d0" stroke-width="0.6"/><path d="M274.4 384.66H630.3" stroke="#cbc9d0" stroke-width="0.6"/><path d="M274.4 366.52H630.3" stroke="#cbc9d0" stroke-width="0.6"/><path d="M274.4 348.37H630.3" stroke="#cbc9d0" stroke-width="0.6"/><path d="M274.4 330.23H630.3" stroke="#cbc9d0" stroke-width="0.6"/><path d="M274.4 312.08H630.3" stroke="#cbc9d0" stroke-width="0.6"/><path d="M274.4 293.94H630.3" stroke="#cbc9d0" stroke-width="0.6"/><path d="M274.4 275.80H630.3" stroke="#cbc9d0" stroke-width="0.6"/><path d="M274.4 257.65H630.3" stroke="#cbc9d0" stroke-width="0.6"/><path d="M274.4 239.51H630.3" stroke="#cbc9d0" stroke-width="0.6"/><path d="M274.4 221.36H630.3" stroke="#cbc9d0" stroke-width="0.6"/><path d="M274.4 203.22H630.3" stroke="#cbc9d0" stroke-width="0.6"/><path d="M274.4 185.08H630.3" stroke="#cbc9d0" stroke-width="0.6"/><path d="M274.4 166.93H630.3" stroke="#cbc9d0" stroke-width="0.6"/><path d="M274.4 148.79H630.3" stroke="#cbc9d0" stroke-width="0.6"/><path d="M274.4 130.64H630.3" stroke="#cbc9d0" stroke-width="0.6"/><path d="M274.4 112.50H630.3" stroke="#cbc9d0" stroke-width="0.6"/><polygon points="274.4,124.5 311.6,124.50 311.6,125.40 324.3,125.40 324.3,126.31 328.4,126.31 328.4,127.21 335.5,127.21 335.5,128.11 355.4,128.11 355.4,129.02 365.1,129.02 365.1,129.92 390.0,129.92 390.0,130.82 399.1,130.82 399.1,131.73 420.9,131.73 420.9,132.63 404.4,132.63 404.4,133.54 415.4,133.54 415.4,134.44 434.7,134.44 434.7,135.34 448.9,135.34 448.9,136.25 455.3,136.25 455.3,137.15 458.4,137.15 458.4,138.05 458.5,138.05 458.5,138.96 460.3,138.96 460.3,139.86 461.5,139.86 461.5,140.76 473.3,140.76 473.3,141.67 532.5,141.67 532.5,142.57 493.3,142.57 493.3,143.47 505.2,143.47 505.2,144.38 491.9,144.38 491.9,145.28 479.6,145.28 479.6,146.18 482.8,146.18 482.8,147.09 483.2,147.09 483.2,147.99 503.3,147.99 503.3,148.89 513.7,148.89 513.7,149.80 503.5,149.80 503.5,150.70 506.9,150.70 506.9,151.61 530.8,151.61 530.8,152.51 516.4,152.51 516.4,153.41 514.5,153.41 514.5,154.32 513.4,154.32 513.4,155.22 515.8,155.22 515.8,156.12 550.3,156.12 550.3,157.03 554.0,157.03 554.0,157.93 550.2,157.93 550.2,158.83 510.6,158.83 510.6,159.74 508.1,159.74 508.1,160.64 512.3,160.64 512.3,161.54 513.6,161.54 513.6,162.45 487.8,162.45 487.8,163.35 483.5,163.35 483.5,164.25 476.2,164.25 476.2,165.16 471.4,165.16 471.4,166.06 459.8,166.06 459.8,166.96 455.4,166.96 455.4,167.87 452.0,167.87 452.0,168.77 448.7,168.77 448.7,169.68 438.9,169.68 438.9,170.58 452.0,170.58 452.0,171.48 467.4,171.48 467.4,172.39 484.3,172.39 484.3,173.29 477.2,173.29 477.2,174.19 492.2,174.19 492.2,175.10 492.0,175.10 492.0,176.00 506.2,176.00 506.2,176.90 516.5,176.90 516.5,177.81 525.6,177.81 525.6,178.71 514.7,178.71 514.7,179.61 520.4,179.61 520.4,180.52 507.3,180.52 507.3,181.42 494.9,181.42 494.9,182.32 510.4,182.32 510.4,183.23 537.8,183.23 537.8,184.13 514.4,184.13 514.4,185.03 567.9,185.03 567.9,185.94 520.7,185.94 520.7,186.84 503.8,186.84 503.8,187.75 468.8,187.75 468.8,188.65 455.7,188.65 455.7,189.55 473.1,189.55 473.1,190.46 493.4,190.46 493.4,191.36 468.6,191.36 468.6,192.26 444.5,192.26 444.5,193.17 441.8,193.17 441.8,194.07 437.7,194.07 437.7,194.97 429.7,194.97 429.7,195.88 425.1,195.88 425.1,196.78 401.6,196.78 401.6,197.68 385.4,197.68 385.4,198.59 367.1,198.59 367.1,199.49 376.5,199.49 376.5,200.39 404.3,200.39 404.3,201.30 422.8,201.30 422.8,202.20 442.2,202.20 442.2,203.10 454.3,203.10 454.3,204.01 465.8,204.01 465.8,204.91 479.6,204.91 479.6,205.82 503.1,205.82 503.1,206.72 587.2,206.72 587.2,207.62 608.3,207.62 608.3,208.53 596.4,208.53 596.4,209.43 574.8,209.43 574.8,210.33 570.8,210.33 570.8,211.24 568.5,211.24 568.5,212.14 552.4,212.14 552.4,213.04 534.9,213.04 534.9,213.95 504.4,213.95 504.4,214.85 473.5,214.85 473.5,215.75 430.1,215.75 430.1,216.66 422.2,216.66 422.2,217.56 421.9,217.56 421.9,218.46 430.0,218.46 430.0,219.37 435.8,219.37 435.8,220.27 447.7,220.27 447.7,221.17 457.2,221.17 457.2,222.08 456.9,222.08 456.9,222.98 452.6,222.98 452.6,223.89 431.4,223.89 431.4,224.79 368.3,224.79 368.3,225.69 359.9,225.69 359.9,226.60 354.2,226.60 354.2,227.50 353.4,227.50 353.4,228.40 354.1,228.40 354.1,229.31 349.6,229.31 349.6,230.21 346.1,230.21 346.1,231.11 344.5,231.11 344.5,232.02 337.6,232.02 337.6,232.92 330.4,232.92 330.4,233.82 325.5,233.82 325.5,234.73 326.7,234.73 326.7,235.63 331.1,235.63 331.1,236.53 332.9,236.53 332.9,237.44 335.6,237.44 335.6,238.34 338.5,238.34 338.5,239.24 339.7,239.24 339.7,240.15 342.6,240.15 342.6,241.05 356.0,241.05 356.0,241.96 365.6,241.96 365.6,242.86 362.5,242.86 362.5,243.76 356.2,243.76 356.2,244.67 362.1,244.67 362.1,245.57 359.6,245.57 359.6,246.47 365.2,246.47 365.2,247.38 347.9,247.38 347.9,248.28 330.8,248.28 330.8,249.18 311.3,249.18 311.3,250.09 293.8,250.09 293.8,250.99 304.0,250.99 304.0,251.89 319.8,251.89 319.8,252.80 337.2,252.80 337.2,253.70 354.8,253.70 354.8,254.60 366.8,254.60 366.8,255.51 373.3,255.51 373.3,256.41 377.2,256.41 377.2,257.31 384.2,257.31 384.2,258.22 397.9,258.22 397.9,259.12 410.9,259.12 410.9,260.03 424.7,260.03 424.7,260.93 445.5,260.93 445.5,261.83 446.9,261.83 446.9,262.74 466.0,262.74 466.0,263.64 480.8,263.64 480.8,264.54 454.2,264.54 454.2,265.45 453.3,265.45 453.3,266.35 447.3,266.35 447.3,267.25 516.2,267.25 516.2,268.16 495.8,268.16 495.8,269.06 526.3,269.06 526.3,269.96 530.6,269.96 530.6,270.87 529.5,270.87 529.5,271.77 528.5,271.77 528.5,272.67 531.8,272.67 531.8,273.58 534.8,273.58 534.8,274.48 534.8,274.48 534.8,275.38 533.9,275.38 533.9,276.29 523.3,276.29 523.3,277.19 516.2,277.19 516.2,278.10 505.1,278.10 505.1,279.00 477.1,279.00 477.1,279.90 436.6,279.90 436.6,280.81 447.4,280.81 447.4,281.71 451.5,281.71 451.5,282.61 434.8,282.61 434.8,283.52 429.1,283.52 429.1,284.42 420.3,284.42 420.3,285.32 412.8,285.32 412.8,286.23 410.8,286.23 410.8,287.13 409.7,287.13 409.7,288.03 404.2,288.03 404.2,288.94 399.7,288.94 399.7,289.84 392.4,289.84 392.4,290.74 388.8,290.74 388.8,291.65 379.4,291.65 379.4,292.55 356.0,292.55 356.0,293.45 325.6,293.45 325.6,294.36 318.6,294.36 318.6,295.26 330.2,295.26 330.2,296.17 343.5,296.17 343.5,297.07 363.6,297.07 363.6,297.97 361.0,297.97 361.0,298.88 348.6,298.88 348.6,299.78 357.7,299.78 357.7,300.68 374.5,300.68 374.5,301.59 387.1,301.59 387.1,302.49 378.1,302.49 378.1,303.39 363.5,303.39 363.5,304.30 354.8,304.30 354.8,305.20 359.5,305.20 359.5,306.10 365.5,306.10 365.5,307.01 377.9,307.01 377.9,307.91 371.8,307.91 371.8,308.81 380.7,308.81 380.7,309.72 385.6,309.72 385.6,310.62 404.3,310.62 404.3,311.52 401.6,311.52 401.6,312.43 393.1,312.43 393.1,313.33 384.4,313.33 384.4,314.24 370.3,314.24 370.3,315.14 361.0,315.14 361.0,316.04 344.5,316.04 344.5,316.95 342.0,316.95 342.0,317.85 330.4,317.85 330.4,318.75 318.3,318.75 318.3,319.66 305.7,319.66 305.7,320.56 299.9,320.56 299.9,321.46 295.4,321.46 295.4,322.37 287.8,322.37 287.8,323.27 284.2,323.27 284.2,324.17 283.8,324.17 283.8,325.08 284.6,325.08 284.6,325.98 282.0,325.98 282.0,326.88 289.5,326.88 289.5,327.79 297.7,327.79 297.7,328.69 302.9,328.69 302.9,329.59 305.7,329.59 305.7,330.50 300.8,330.50 300.8,331.40 301.3,331.40 301.3,332.31 313.1,332.31 313.1,333.21 335.2,333.21 335.2,334.11 332.7,334.11 332.7,335.02 352.1,335.02 352.1,335.92 350.1,335.92 350.1,336.82 355.4,336.82 355.4,337.73 347.8,337.73 347.8,338.63 350.6,338.63 350.6,339.53 332.3,339.53 332.3,340.44 361.6,340.44 361.6,341.34 340.9,341.34 340.9,342.24 316.1,342.24 316.1,343.15 301.3,343.15 301.3,344.05 288.1,344.05 288.1,344.95 281.6,344.95 281.6,345.86 284.1,345.86 284.1,346.76 286.2,346.76 286.2,347.66 287.7,347.66 287.7,348.57 286.2,348.57 286.2,349.47 284.0,349.47 284.0,350.38 282.7,350.38 282.7,351.28 280.5,351.28 280.5,352.18 278.1,352.18 278.1,353.09 277.0,353.09 277.0,353.99 282.8,353.99 282.8,354.89 290.2,354.89 290.2,355.80 297.0,355.80 297.0,356.70 303.0,356.70 303.0,357.60 308.9,357.60 308.9,358.51 315.4,358.51 315.4,359.41 320.8,359.41 320.8,360.31 323.0,360.31 323.0,361.22 321.8,361.22 321.8,362.12 314.7,362.12 314.7,363.02 325.7,363.02 325.7,363.93 323.6,363.93 323.6,364.83 316.2,364.83 316.2,365.73 312.8,365.73 312.8,366.64 305.0,366.64 305.0,367.54 304.3,367.54 304.3,368.45 293.9,368.45 293.9,369.35 285.5,369.35 285.5,370.25 282.7,370.25 282.7,371.16 279.0,371.16 279.0,372.06 278.7,372.06 278.7,372.96 277.3,372.96 277.3,373.87 280.5,373.87 280.5,374.77 284.3,374.77 284.3,375.67 288.8,375.67 288.8,376.58 295.7,376.58 295.7,377.48 306.4,377.48 306.4,378.38 315.6,378.38 315.6,379.29 306.0,379.29 306.0,380.19 296.1,380.19 296.1,381.09 295.6,381.09 295.6,382.00 301.0,382.00 301.0,382.90 308.0,382.90 308.0,383.80 315.3,383.80 315.3,384.71 320.9,384.71 320.9,385.61 308.9,385.61 308.9,386.52 293.9,386.52 293.9,387.42 302.8,387.42 302.8,388.32 318.1,388.32 318.1,389.23 327.5,389.23 327.5,390.13 335.1,390.13 335.1,391.03 346.5,391.03 346.5,391.94 362.8,391.94 362.8,392.84 376.4,392.84 376.4,393.74 382.5,393.74 382.5,394.65 385.8,394.65 385.8,395.55 395.1,395.55 395.1,396.45 413.1,396.45 413.1,397.36 420.1,397.36 420.1,398.26 434.1,398.26 434.1,399.16 434.1,399.16 434.1,400.07 422.9,400.07 422.9,400.97 412.8,400.97 412.8,401.87 423.2,401.87 423.2,402.78 431.1,402.78 431.1,403.68 445.6,403.68 445.6,404.59 470.7,404.59 470.7,405.49 511.0,405.49 511.0,406.39 488.5,406.39 488.5,407.30 475.4,407.30 475.4,408.20 464.2,408.20 464.2,409.10 437.7,409.10 437.7,410.01 403.3,410.01 403.3,410.91 438.1,410.91 438.1,411.81 451.6,411.81 451.6,412.72 437.6,412.72 437.6,413.62 429.2,413.62 429.2,414.52 406.8,414.52 406.8,415.43 392.9,415.43 392.9,416.33 384.8,416.33 384.8,417.23 372.4,417.23 372.4,418.14 362.9,418.14 362.9,419.04 354.6,419.04 354.6,419.94 369.0,419.94 369.0,420.85 378.1,420.85 378.1,421.75 368.8,421.75 368.8,422.66 340.4,422.66 340.4,423.56 325.8,423.56 325.8,424.46 318.0,424.46 318.0,425.37 306.9,425.37 306.9,426.27 296.3,426.27 296.3,427.17 289.7,427.17 289.7,428.08 305.9,428.08 305.9,428.98 315.2,428.98 315.2,429.88 306.2,429.88 306.2,430.79 308.6,430.79 308.6,431.69 317.1,431.69 317.1,432.59 310.0,432.59 310.0,433.50 300.8,433.50 300.8,434.40 292.9,434.40 292.9,435.30 286.1,435.30 286.1,436.21 281.4,436.21 281.4,437.11 277.7,437.11 277.7,438.01 275.6,438.01 275.6,438.92 275.0,438.92 275.0,439.82 275.0,439.82 275.0,440.30 274.4,440.3" fill="#7e86b1"/><path d="M274.4 142.4H584" stroke="#7e86b1" stroke-width="1.1"/><path d="M274.4 158.2H562" stroke="#7e86b1" stroke-width="1.1"/><path d="M274.4 185.5H580" stroke="#7e86b1" stroke-width="1.1"/><path d="M274.4 156.8H549" stroke="#7e86b1" stroke-width="1.1"/><path d="M274.4 184H547" stroke="#7e86b1" stroke-width="1.1"/><path d="M274.4 208H630" stroke="#7e86b1" stroke-width="1.1"/><path d="M274.4 209.4H590" stroke="#7e86b1" stroke-width="1.1"/><path d="M274.4 263.9H481" stroke="#7e86b1" stroke-width="1.1"/><path d="M274.4 267.9H535" stroke="#7e86b1" stroke-width="1.1"/><path d="M274.4 270.7H556" stroke="#7e86b1" stroke-width="1.1"/><path d="M274.4 272.9H546" stroke="#7e86b1" stroke-width="1.1"/><path d="M274.4 274.6H560" stroke="#7e86b1" stroke-width="1.1"/><path d="M274.4 276.4H566" stroke="#7e86b1" stroke-width="1.1"/><path d="M274.4 405.9H514.7" stroke="#7e86b1" stroke-width="1.1"/><path d="M274.4 411.8H461.7" stroke="#7e86b1" stroke-width="1.1"/><path d="M274.4 207.7H836.4" stroke="#d29ad8" stroke-width="1.3"/><path d="M274.4 207.7H630.3" stroke="#8a5aad" stroke-width="1.5"/><path d="M274.8 207.4 L275.5 206.8 L277.7 200.2 L279.2 190.9 L280.6 184.0 L281.5 189.0 L282.1 177.5 L282.4 182.1 L283.3 170.4 L284.0 160.8 L284.5 165.0 L285.6 155.4 L286.7 168.5 L288.6 154.5 L289.5 170.4 L290.0 164.8 L291.4 177.8 L292.1 166.0 L292.5 171.2 L293.6 157.3 L294.3 146.9 L294.7 150.3 L295.3 136.3 L295.7 142.5 L296.8 132.1 L297.5 144.9 L298.0 138.8 L299.2 149.9 L299.9 161.4 L300.4 157.0 L301.6 166.6 L302.0 153.8 L302.2 160.7 L302.9 148.0 L303.2 157.9 L303.4 153.0 L303.9 162.9 L304.6 146.8 L305.0 152.6 L306.1 139.6 L306.8 152.1 L307.3 146.0 L308.5 157.3 L309.2 167.8 L309.6 164.8 L310.6 174.1 L311.4 159.2 L311.9 166.3 L313.2 153.6 L313.9 140.5 L314.3 147.7 L315.0 131.2 L315.4 138.4 L316.5 125.6 L317.2 135.2 L317.6 130.5 L318.8 140.5 L320.3 154.5 L321.1 141.7 L321.6 148.4 L322.9 134.9 L323.4 151.2 L323.6 144.7 L324.4 157.3 L325.2 167.7 L325.6 164.6 L326.4 178.9 L326.9 172.7 L328.1 183.4 L329.0 194.9 L329.5 190.2 L330.9 200.2 L331.8 212.6 L332.3 207.5 L333.7 218.9 L335.2 209.6 L336.5 221.7 L337.2 209.8 L337.6 214.9 L338.2 199.7 L338.6 206.5 L339.7 193.7 L340.4 204.7 L340.9 198.6 L342.1 209.6 L342.8 225.8 L343.3 216.3 L344.5 231.9 L345.5 216.5 L346.1 222.4 L347.7 209.6 L348.6 193.3 L349.1 202.8 L350.5 187.2 L352.4 200.2 L353.2 188.4 L353.6 194.3 L354.4 180.8 L354.9 185.4 L356.1 176.0 L357.0 162.5 L357.5 169.2 L358.9 157.3 L359.8 146.8 L360.3 149.9 L361.7 140.5 L362.6 155.4 L363.1 146.7 L364.5 161.0 L365.1 150.0 L365.4 154.9 L366.4 142.4 L367.3 156.9 L367.8 152.0 L369.2 164.8 L370.1 152.6 L370.7 163.1 L371.0 158.2 L371.6 173.2 L372.0 168.4 L372.9 177.8 L375.7 189.0 L376.6 178.0 L377.2 193.2 L377.6 187.8 L378.5 200.2 L379.4 184.5 L379.9 191.2 L381.3 177.8 L383.1 164.8 L383.7 175.7 L384.1 169.3 L385.0 179.7 L385.5 169.2 L385.8 174.9 L386.5 163.8 L387.2 176.1 L387.6 172.4 L388.7 183.4 L390.6 170.4 L391.5 181.8 L392.0 177.9 L393.4 187.2 L394.3 199.1 L394.8 194.8 L396.2 206.8 L398.1 194.6 L398.5 183.5 L398.7 187.7 L399.1 177.0 L399.4 181.3 L400.0 170.2 L400.9 159.1 L401.5 164.8 L403.0 152.5 L405.9 140.7 L406.8 151.5 L407.4 146.5 L408.9 155.4 L409.8 142.8 L410.4 148.2 L411.3 132.5 L411.8 138.8 L413.3 126.5 L413.9 138.2 L414.3 132.7 L414.9 148.0 L415.2 141.6 L416.2 152.5 L416.8 162.7 L417.2 157.9 L417.8 170.1 L418.2 166.7 L419.2 176.1 L420.1 189.4 L420.7 182.7 L422.2 193.9 L422.8 183.3 L423.2 186.8 L423.8 175.8 L424.1 180.3 L425.1 170.2 L425.7 161.1 L426.1 164.6 L426.7 151.5 L427.1 155.4 L428.1 146.6 L430.1 133.3 L430.8 146.4 L431.3 140.6 L432.5 152.5 L434.9 165.8 L435.5 155.5 L435.9 159.9 L436.9 151.0 L438.4 164.3 L438.9 154.0 L439.1 159.3 L439.9 149.5 L440.6 161.5 L440.9 158.6 L442.0 170.2 L442.7 180.5 L443.1 174.7 L444.3 185.0 L445.8 171.7 L446.5 180.9 L446.9 177.3 L447.9 186.5 L450.2 190.9 L450.9 202.9 L451.4 198.0 L452.6 208.6 L454.1 217.5 L454.5 206.2 L454.8 210.4 L455.5 199.8 L456.3 213.0 L456.9 207.2 L458.2 220.4 L459.4 231.6 L460.1 227.4 L462.0 238.2 L462.6 227.0 L463.0 231.2 L463.6 219.6 L464.0 224.9 L465.0 214.5 L465.9 203.4 L466.4 207.1 L467.9 196.8 L468.6 211.6 L469.1 205.4 L470.3 217.5 L472.4 223.4 L473.3 236.0 L473.9 231.4 L475.3 244.1 L476.0 254.3 L476.4 250.5 L477.4 258.8 L479.8 267.7 L481.2 257.4 L481.9 267.6 L482.2 263.9 L483.3 273.6 L484.0 285.4 L484.5 279.9 L485.7 289.9 L486.4 276.0 L486.9 281.7 L488.0 270.7 L488.7 283.8 L489.1 278.0 L490.1 291.3 L490.8 278.4 L491.1 284.5 L492.2 273.6 L494.5 285.4 L495.2 296.3 L495.7 293.1 L496.9 303.2 L497.5 292.7 L497.9 296.5 L498.5 284.0 L498.9 290.2 L499.9 279.5 L500.7 266.9 L501.2 271.1 L502.5 258.8 L503.2 269.4 L503.7 264.0 L504.9 273.6 L506.9 261.8 L507.5 274.5 L507.8 268.8 L508.7 279.5 L509.4 270.7 L509.8 273.5 L510.8 264.8 L513.7 252.9 L514.6 242.4 L515.2 246.9 L516.7 238.2 L519.0 224.9 L520.2 236.8 L521.0 232.1 L523.0 243.6 L524.6 236.0 L525.5 248.2 L526.0 243.3 L527.5 254.8 L529.6 247.0 L530.3 260.0 L530.8 254.5 L531.5 266.0 L531.9 261.3 L533.1 273.5 L533.9 285.7 L534.4 278.6 L535.7 290.3 L537.8 284.0 L538.6 274.8 L539.1 279.6 L540.5 269.8 L542.0 258.7 L543.0 263.5 L545.4 254.8 L546.2 266.7 L546.7 260.3 L548.0 271.6 L550.6 284.7 L552.8 277.0 L553.6 292.7 L554.1 285.4 L555.5 299.7 L556.4 311.3 L557.0 307.1 L558.5 318.3 L559.5 304.5 L560.1 308.4 L561.8 295.9 L562.7 283.2 L563.3 288.3 L564.8 277.2 L567.4 264.2 L568.3 278.9 L568.9 273.3 L570.4 284.7 L573.0 277.0 L573.6 289.9 L574.0 283.1 L574.6 298.8 L575.0 291.4 L576.0 303.4 L579.0 314.6 L580.9 305.0 L581.7 320.2 L582.2 312.6 L583.5 325.8 L584.4 334.4 L585.0 330.8 L586.5 340.7 L589.0 333.0 L589.6 343.6 L589.9 340.1 L590.5 354.0 L590.8 348.3 L591.7 359.4 L592.6 371.5 L593.2 365.2 L594.7 378.1 L595.6 388.3 L596.2 384.0 L597.7 393.0 L600.3 385.0 L601.1 394.6 L601.6 390.0 L602.9 400.5 L605.2 393.0 L605.7 406.1 L606.1 399.6 L606.6 415.7 L606.9 411.3 L607.8 422.9 L608.4 410.4 L608.8 416.8 L609.4 402.3 L609.8 407.4 L610.8 394.9 L611.6 408.7 L612.1 401.1 L613.4 413.6 L615.3 404.0 L616.1 419.3 L616.7 413.6 L617.5 429.3 L618.0 421.5 L619.4 436.0 L620.1 426.5 L620.5 429.4 L621.2 417.8 L621.6 421.9 L622.7 411.7 L624.6 400.5 L625.4 412.6 L625.9 407.6 L627.2 419.2 L627.8 405.4 L628.2 410.4 L628.8 398.1 L629.2 401.1 L630.2 390.0 L630.8 379.3 L631.2 382.1 L632.2 372.0 L633.3 355.3 L633.9 364.8 L635.6 349.6 L636.3 340.2 L636.8 343.7 L637.5 331.7 L638.0 335.3 L639.2 325.8 L639.6 335.5 L639.9 331.2 L640.6 341.0 L641.2 329.7 L641.5 334.4 L642.1 322.5 L642.5 326.0 L643.4 316.0 L644.2 306.8 L644.7 310.4 L646.0 300.6 L646.5 313.3 L646.8 307.8 L647.6 318.8 L648.2 308.9 L648.6 311.7 L649.6 302.0 L650.3 311.9 L650.7 307.5 L651.8 317.4 L652.6 301.5 L653.1 308.6 L654.4 295.0 L654.9 309.0 L655.2 302.0 L656.0 314.6 L656.6 301.8 L657.0 306.9 L658.0 295.0 L658.6 306.1 L659.0 300.8 L660.0 311.8 L662.2 324.4 L662.6 313.5 L662.9 318.6 L663.6 307.6 L664.7 292.9 L665.3 298.3 L667.0 285.2 L667.6 296.4 L667.9 291.0 L668.5 303.5 L668.9 300.1 L669.8 310.4 L670.5 297.7 L670.9 304.2 L672.0 290.8 L672.4 278.4 L672.7 284.2 L673.4 274.0 L674.8 286.6 L675.5 275.3 L675.9 281.5 L677.0 271.2 L677.6 283.4 L678.0 278.7 L679.0 290.8 L679.7 301.7 L680.1 296.8 L681.2 309.0 L682.0 294.5 L682.5 302.3 L683.8 288.0 L686.0 302.0 L688.0 296.4 L688.7 310.4 L689.1 303.3 L690.2 316.0 L690.8 329.8 L691.2 323.2 L692.2 335.6 L692.6 324.8 L692.9 329.0 L693.6 317.4 L694.2 326.5 L694.5 324.2 L695.1 336.6 L695.5 332.4 L696.4 341.2 L696.8 350.3 L697.1 347.9 L697.8 356.6 L698.1 345.0 L698.3 349.9 L698.7 339.5 L698.9 343.5 L699.4 332.8 L700.1 342.8 L700.5 338.2 L701.7 349.6 L702.5 361.2 L703.0 355.1 L704.2 366.4 L706.0 358.0 L708.4 366.4 L709.0 378.9 L709.4 372.5 L710.4 383.2 L712.6 397.2 L714.0 411.2 L714.4 397.2 L714.7 402.5 L715.4 391.6 L716.0 404.2 L716.3 398.2 L716.9 412.9 L717.3 408.2 L718.2 418.2 L718.8 407.3 L719.2 413.4 L720.2 402.8 L722.4 388.8 L723.3 376.5 L723.8 380.4 L725.2 367.8 L725.6 378.2 L725.9 372.8 L726.6 383.2 L728.6 376.0 L729.3 388.2 L729.7 384.4 L730.8 395.8 L733.0 383.0 L733.6 371.0 L734.0 376.1 L735.0 363.6 L735.4 375.5 L735.7 370.2 L736.4 380.4 L737.3 366.1 L737.8 371.7 L739.2 358.0 L740.1 347.3 L740.6 351.5 L742.0 341.2 L744.2 328.6 L746.2 341.2 L748.2 355.2 L748.9 365.1 L749.3 361.5 L750.4 372.0 L751.0 359.5 L751.4 365.5 L752.4 355.2 L754.6 346.8 L756.0 350.0 L756.7 338.8 L757.1 343.3 L758.2 334.2" fill="none" stroke="#505050" stroke-width="0.5" stroke-linejoin="miter"/><path d="M228.2 348.4H836.4" stroke="#222" stroke-width="0.8" stroke-dasharray="1 1"/><path d="M518.6 104.8V587.4" stroke="#858585" stroke-width="0.65"/><path d="M576.6 275.6H664" stroke="#ee1c1c" stroke-width="1"/><path d="M668.6 275.6l-6-2.2v4.4z" fill="#ee1c1c"/><text x="349.6" y="168.2" font-size="10.5" font-weight="bold" text-anchor="middle" fill="#111" stroke="#fff" stroke-width="1.6" paint-order="stroke" font-family="Liberation Sans, sans-serif">A</text><text x="360.4" y="412" font-size="10.5" font-weight="bold" text-anchor="middle" fill="#111" stroke="#fff" stroke-width="1.6" paint-order="stroke" font-family="Liberation Sans, sans-serif">B</text><path d="M228.2 462.1H863.6" stroke="#9a9a9a" stroke-width="0.9"/><path d="M228.2 587.6H836.4" stroke="#9a9a9a" stroke-width="0.8"/><path d="M836.6 104.8V587.6" stroke="#8c8c94" stroke-width="0.9"/><path d="M276.6 525.6V513.9M281.6 526.8V514.6M284.6 527.4V517.0M293.1 524.9V519.3M297.6 524.9V522.2M311.6 524.9V521.8M314.6 524.9V510.4M323.6 527.0V522.2M326.6 527.6V519.5M348.6 525.6V509.8M352.1 526.3V511.2M352.6 526.2V520.5M355.1 524.9V514.4M358.1 524.9V516.6M359.6 525.7V515.3M360.1 525.9V519.9M368.1 527.0V522.1M369.1 524.9V520.0M369.6 524.9V521.7M381.1 524.9V517.2M382.6 524.9V518.5M384.1 524.9V513.5M390.1 527.1V512.0M393.6 524.9V522.0M396.1 526.1V511.5M396.6 524.9V520.6M406.1 524.9V521.6M408.6 526.1V522.2M410.6 526.2V521.6M411.1 524.9V514.9M411.6 524.9V515.2M415.6 527.3V520.4M416.1 525.8V518.4M419.1 524.9V515.6M419.6 526.3V522.1M420.1 524.9V518.8M424.6 524.9V522.1M430.6 524.9V522.2M440.1 524.9V520.0M442.6 526.8V514.8M443.1 524.9V518.4M443.6 525.6V511.2M447.6 524.9V515.6M451.6 524.9V520.6M454.6 524.9V522.1M455.1 524.9V521.6M456.1 526.2V509.9M459.6 524.9V509.8M462.6 524.9V512.8M466.1 524.9V521.7M471.6 524.9V516.4M473.1 524.9V516.5M477.1 524.9V516.9M480.6 526.6V518.6M485.6 525.6V521.3M487.1 527.1V521.4M495.6 524.9V520.4M498.1 524.9V519.4M505.1 524.9V520.9M513.1 524.9V521.5M520.6 526.2V522.2M522.1 526.0V519.3M522.6 526.9V521.3M526.1 526.8V515.3M532.6 527.6V510.2M534.1 524.9V519.5M536.6 524.9V513.0M537.1 524.9V510.0M540.6 525.6V514.1M544.1 527.5V522.2M554.1 524.9V509.7M556.6 526.0V516.1M565.6 524.9V513.7M566.1 524.9V515.8M570.1 524.9V522.1M572.1 525.7V522.1M585.6 524.9V522.2M591.6 524.9V517.8M592.1 524.9V520.0M599.1 526.1V516.5M607.1 527.0V520.0M607.6 524.9V518.4M611.6 525.5V516.6M615.1 524.9V512.9M617.1 524.9V515.7M617.6 524.9V516.1M621.6 527.2V520.5M622.6 526.8V516.4M625.1 524.9V518.7M628.6 524.9V518.0M630.1 524.9V519.5M631.6 527.1V519.7M632.1 524.9V519.9M640.1 527.2V518.6M646.6 526.2V521.4M650.1 524.9V522.3M663.1 526.5V517.9M676.1 524.9V520.7M678.1 524.9V521.9M683.6 524.9V522.4M689.1 525.9V522.3M701.1 527.4V503.9M703.6 525.5V509.7M709.6 524.9V514.8M728.6 524.9V522.1M730.1 527.3V522.9M738.1 524.9V517.2M749.1 526.9V522.7M749.6 524.9V521.5M752.1 524.9V523.3M755.1 527.2V520.6M757.6 524.9V523.0" stroke="#8fd0c8" stroke-width="0.55"/><path d="M279.6 524.9V533.0M288.1 524.9V529.0M310.1 524.9V528.2M310.6 524.2V529.2M317.1 523.3V527.3M322.6 523.8V553.2M329.1 524.9V536.2M330.1 522.3V533.7M332.6 522.9V530.8M335.6 524.9V527.2M339.1 522.1V538.3M351.6 524.9V529.2M358.6 524.9V536.9M359.1 524.9V533.1M371.6 524.9V531.2M385.1 524.9V528.1M389.6 524.9V529.1M392.6 524.9V536.3M403.1 523.3V533.9M413.1 524.9V527.6M418.6 523.6V527.4M428.6 522.9V527.5M434.1 523.0V529.8M464.6 523.6V527.2M486.6 524.9V529.9M494.1 522.3V533.9M503.1 524.9V529.7M510.1 524.3V538.1M512.1 522.3V527.2M514.1 524.9V527.2M516.1 523.7V528.3M517.1 524.9V527.2M527.6 522.3V527.3M528.6 524.9V529.4M539.1 524.4V529.9M541.6 523.1V538.3M543.1 524.9V534.8M545.1 524.9V527.2M546.6 522.7V527.2M547.1 524.9V536.5M552.6 523.5V527.7M559.1 524.9V531.1M560.1 523.5V536.8M562.6 524.9V528.8M584.6 523.8V539.0M589.1 522.9V528.8M608.6 522.8V528.6M623.6 524.9V529.3M636.1 524.9V555.3M669.1 522.8V536.4M670.1 524.9V532.0M675.6 524.9V539.5M681.1 523.1V535.4M685.1 524.9V531.7M692.1 523.6V544.3M699.6 524.9V532.5M700.1 524.9V535.0M706.6 524.3V530.7M719.6 524.2V527.2M736.6 523.2V532.1M746.1 524.9V533.2M755.6 523.3V529.0M757.1 524.9V527.6M758.1 522.7V527.1" stroke="#f5a6a6" stroke-width="0.55"/><path d="M277.1 524.9V510.5M278.1 525.5V519.5M280.1 525.6V514.8M281.1 524.9V519.4M282.1 527.6V515.0M282.6 525.5V514.2M285.6 525.6V517.9M288.6 524.9V521.5M289.1 524.9V517.7M289.6 524.9V522.1M291.1 526.2V518.1M291.6 524.9V510.1M292.6 524.9V516.0M293.6 524.9V522.1M298.1 527.0V519.1M299.1 527.5V516.7M301.6 524.9V521.2M302.1 524.9V519.1M303.1 524.9V522.2M304.1 527.3V521.5M304.6 524.9V519.7M305.6 524.9V521.8M306.1 524.9V521.8M306.6 524.9V518.8M315.6 524.9V518.8M316.6 524.9V520.0M318.1 524.9V511.4M319.1 526.8V522.1M319.6 524.9V521.4M320.6 526.9V517.1M322.1 524.9V521.6M323.1 524.9V520.0M325.1 525.6V522.2M326.1 524.9V509.8M327.1 524.9V518.9M328.1 524.9V520.1M328.6 524.9V522.2M329.6 524.9V519.0M331.6 526.5V521.6M333.1 524.9V515.2M334.6 526.0V509.0M336.6 524.9V515.8M337.6 524.9V516.8M338.6 524.9V519.3M342.1 524.9V518.9M343.1 527.5V512.1M343.6 527.0V516.7M345.1 526.4V515.6M347.6 527.3V519.5M349.1 524.9V518.0M349.6 524.9V521.5M350.6 526.2V515.6M351.1 524.9V518.1M353.1 526.7V514.2M355.6 524.9V512.0M356.6 524.9V518.8M357.1 527.6V516.5M362.1 524.9V517.7M362.6 525.8V515.0M365.6 524.9V520.5M366.6 527.4V518.8M367.6 524.9V513.2M368.6 524.9V517.9M370.6 526.5V515.8M373.1 526.6V521.1M373.6 524.9V521.4M374.6 524.9V522.1M375.1 524.9V515.9M375.6 524.9V517.8M376.1 525.7V520.1M377.6 524.9V510.1M378.6 524.9V522.1M379.6 524.9V511.9M380.1 524.9V521.9M381.6 526.7V516.1M386.1 524.9V521.9M387.1 524.9V522.2M387.6 524.9V517.7M388.1 524.9V516.2M391.1 526.4V519.0M391.6 524.9V518.7M392.1 525.9V522.1M394.6 524.9V513.8M395.1 524.9V522.2M397.1 524.9V509.7M398.6 524.9V511.1M399.1 526.1V515.8M399.6 526.9V514.3M400.6 524.9V516.6M402.6 524.9V521.8M405.6 527.2V514.4M406.6 526.8V515.8M407.6 526.0V514.2M409.6 524.9V521.8M410.1 524.9V513.5M412.1 524.9V521.9M412.6 525.6V522.2M414.1 524.9V517.5M414.6 524.9V522.2M416.6 526.5V521.0M417.6 527.0V520.5M418.1 526.0V520.3M420.6 525.5V521.9M421.1 526.4V518.5M422.1 527.0V520.1M423.1 526.8V518.2M425.1 526.3V520.8M425.6 526.3V519.4M426.6 524.9V516.0M427.6 526.5V517.9M428.1 525.5V520.7M430.1 526.0V513.5M431.6 527.0V521.5M434.6 527.1V518.6M435.1 525.8V518.9M435.6 525.6V515.9M436.1 524.9V519.3M437.6 524.9V520.9M438.6 524.9V517.3M439.6 526.7V511.0M440.6 524.9V509.9M442.1 526.1V514.1M444.1 526.1V522.2M444.6 524.9V521.3M445.1 526.0V522.2M448.1 525.7V522.1M450.6 524.9V522.2M451.1 526.2V516.8M452.6 524.9V518.4M453.1 525.7V520.7M453.6 524.9V520.2M459.1 524.9V517.7M460.1 524.9V509.9M463.1 524.9V522.1M465.1 524.9V513.4M465.6 527.4V517.4M467.1 526.2V520.9M467.6 524.9V516.1M468.1 524.9V519.5M468.6 524.9V517.5M469.1 524.9V516.2M469.6 526.3V521.9M470.1 524.9V520.1M471.1 524.9V521.2M472.6 526.0V519.8M473.6 527.5V521.4M474.1 524.9V513.1M475.1 524.9V516.6M476.1 526.5V520.9M478.1 524.9V521.6M478.6 527.1V522.1M480.1 527.4V511.0M481.6 526.6V521.1M482.1 525.5V521.6M484.1 527.3V515.4M484.6 524.9V522.2M485.1 524.9V517.0M487.6 524.9V520.6M488.1 527.3V522.2M489.1 524.9V521.5M489.6 526.3V510.4M490.6 526.8V517.8M491.1 524.9V515.0M491.6 526.0V514.2M494.6 524.9V520.0M496.1 526.1V515.4M496.6 524.9V516.6M497.1 526.1V510.7M498.6 527.0V511.3M499.6 524.9V521.7M500.1 526.8V517.4M501.1 524.9V519.9M501.6 527.1V516.5M502.1 524.9V519.4M502.6 524.9V516.8M504.6 524.9V512.6M506.6 524.9V513.6M507.6 524.9V520.6M508.1 526.5V520.5M508.6 524.9V509.8M511.6 524.9V521.4M512.6 524.9V520.1M514.6 524.9V519.7M515.1 524.9V518.9M515.6 524.9V516.8M518.6 524.9V507.5M519.1 524.9V514.3M520.1 524.9V510.2M521.1 524.9V518.7M523.1 524.9V521.8M523.6 527.1V516.5M524.6 524.9V520.5M529.1 527.6V522.1M529.6 526.1V521.8M531.1 527.1V511.4M531.6 526.7V521.1M534.6 525.5V521.3M535.1 524.9V517.3M535.6 524.9V517.9M537.6 524.9V521.5M538.1 524.9V521.2M540.1 524.9V517.0M542.1 527.3V519.0M542.6 527.3V514.1M544.6 524.9V517.5M545.6 524.9V512.6M546.1 524.9V515.0M548.1 525.8V514.2M549.1 525.8V516.9M550.6 526.6V519.2M551.6 526.7V521.5M552.1 526.2V518.7M554.6 524.9V522.2M556.1 526.5V510.7M557.1 526.7V515.2M558.6 526.5V522.1M561.1 524.9V520.9M561.6 527.2V519.6M564.6 527.2V521.4M565.1 527.7V521.7M571.1 526.6V522.2M574.1 527.3V518.1M576.6 527.1V522.2M577.1 524.9V518.5M577.6 526.2V510.0M578.6 526.9V516.1M579.1 526.7V520.6M579.6 526.0V522.2M581.6 524.9V519.4M582.6 525.5V514.2M583.1 527.4V513.4M586.1 524.9V520.5M587.1 524.9V504.8M587.6 526.7V518.5M588.6 524.9V518.5M590.6 524.9V518.7M593.1 525.9V519.1M594.1 524.9V515.9M594.6 526.6V520.7M597.6 524.9V517.0M598.1 527.4V512.8M598.6 524.9V505.5M599.6 524.9V516.8M600.6 524.9V517.6M601.1 525.4V491.2M601.6 524.9V488.0M602.1 524.9V513.0M603.6 524.9V498.0M608.1 526.2V519.2M609.6 526.1V509.9M612.6 524.9V520.7M613.1 525.5V515.2M615.6 524.9V519.3M618.1 527.7V520.7M618.6 524.9V520.3M619.1 524.9V509.3M619.6 527.4V519.8M621.1 526.8V520.6M624.6 524.9V503.0M626.6 527.3V515.9M627.1 525.8V502.1M627.6 524.9V513.7M629.1 524.9V518.3M630.6 524.9V504.1M631.1 525.7V512.7M632.6 527.1V520.7M635.1 524.9V520.5M635.6 526.3V520.2M637.1 524.9V517.3M639.1 524.9V518.5M640.6 524.9V522.0M641.1 524.9V522.4M641.6 524.9V518.7M643.6 527.5V513.2M644.1 526.0V517.8M645.1 524.9V516.8M646.1 526.4V512.6M647.6 527.2V521.9M650.6 524.9V517.3M651.6 526.4V512.5M652.6 525.5V520.6M653.1 524.9V521.6M654.1 526.1V522.4M654.6 527.4V521.0M655.6 527.1V519.7M656.6 524.9V518.7M658.1 527.6V522.2M658.6 524.9V519.8M659.1 524.9V522.5M660.1 524.9V516.5M661.1 527.4V512.7M661.6 526.9V522.4M662.1 524.9V520.4M663.6 524.9V521.4M664.1 527.1V514.6M664.6 527.2V513.5M665.1 524.9V511.9M665.6 524.9V515.9M666.1 524.9V517.6M668.6 524.9V519.8M669.6 524.9V522.4M670.6 524.9V519.1M671.1 526.0V521.9M671.6 524.9V513.2M672.1 524.9V518.3M673.1 524.9V513.2M675.1 524.9V518.1M676.6 527.7V520.8M678.6 524.9V521.5M679.6 524.9V515.9M680.6 524.9V514.6M681.6 524.9V519.6M682.6 526.8V521.4M684.1 527.6V522.3M686.1 524.9V517.0M687.1 527.4V521.1M687.6 525.4V512.1M688.6 524.9V518.2M689.6 526.2V512.4M691.1 524.9V514.7M691.6 527.6V513.1M692.6 527.4V521.1M693.1 526.4V518.2M693.6 524.9V522.5M695.6 526.7V522.4M696.1 525.7V512.7M699.1 524.9V522.5M700.6 527.2V516.9M702.1 524.9V504.5M702.6 524.9V520.9M703.1 527.3V511.1M704.1 526.5V520.9M704.6 525.7V508.5M706.1 526.4V508.0M708.6 524.9V519.5M709.1 524.9V512.6M710.6 527.2V520.6M711.1 527.5V508.5M713.1 526.4V508.0M714.6 524.9V504.7M716.1 526.6V520.5M717.1 524.9V512.4M718.6 524.9V511.6M724.1 524.9V523.3M724.6 524.9V519.0M725.1 524.9V520.9M726.1 525.8V523.0M726.6 524.9V522.9M727.1 524.9V518.9M730.6 524.9V518.4M731.1 525.5V522.7M732.6 527.5V521.8M733.1 524.9V522.9M733.6 525.8V521.6M734.1 524.9V521.0M735.1 526.9V523.3M735.6 524.9V523.1M740.1 524.9V523.2M740.6 526.0V520.9M741.6 526.1V517.1M742.6 527.5V516.9M743.1 524.9V520.3M744.1 524.9V518.9M747.6 527.0V517.9M748.1 526.4V520.6M750.1 526.5V517.1M751.1 524.9V523.4M752.6 524.9V522.8M753.1 525.5V521.0M758.6 526.2V523.2M759.1 524.9V522.5M759.6 524.9V518.0M605.6 524.9V464.9M611 524.9V468.9M626 524.9V482.9M637 524.9V486.9M600.5 524.9V492.9M588 524.9V489.9M466.8 524.9V494.9M445.4 524.9V504.9M515.6 524.9V503.9M340 524.9V505.9M345 524.9V504.9M318 524.9V505.9M655.6 524.9V500.9M710.5 524.9V496.9M714 524.9V502.9M704 524.9V508.9M573 524.9V509.9M532 524.9V510.9M484 524.9V510.9M300.6 524.9V510.9M731 524.9V516.9" stroke="#1fa296" stroke-width="0.62"/><path d="M275.6 524.9V529.5M276.1 523.2V531.7M277.6 524.4V530.2M278.6 524.9V531.9M279.1 524.9V527.9M280.6 522.2V535.9M283.1 524.0V533.5M283.6 523.4V527.6M284.1 524.9V528.1M285.1 523.8V534.3M286.1 523.4V538.6M286.6 524.9V527.4M287.1 524.9V527.7M287.6 524.9V527.5M290.1 524.9V531.5M290.6 524.4V527.9M292.1 524.9V527.3M294.1 524.9V533.6M294.6 524.9V528.4M295.1 524.9V529.0M295.6 524.9V531.6M296.1 524.9V527.2M296.6 524.9V533.4M297.1 524.9V529.2M298.6 524.4V528.0M299.6 522.9V527.5M300.1 524.9V536.7M300.6 524.1V529.8M301.1 524.9V538.4M302.6 524.9V529.4M303.6 522.6V527.2M305.1 524.9V538.6M307.1 522.6V537.3M307.6 524.9V527.3M308.1 524.9V528.6M308.6 524.9V538.3M309.1 522.7V535.3M309.6 522.3V539.2M311.1 524.9V527.2M312.1 524.1V530.1M312.6 524.9V538.3M313.1 523.9V530.2M313.6 524.9V530.2M314.1 523.5V535.9M315.1 523.2V529.9M316.1 524.9V529.8M317.6 524.9V529.6M318.6 524.0V527.6M320.1 523.5V538.4M321.1 524.9V562.3M321.6 524.9V565.9M324.1 524.9V571.5M324.6 524.9V541.7M325.6 524.9V527.3M327.6 522.8V535.8M330.6 522.3V536.7M331.1 524.9V528.9M332.1 524.9V527.7M333.6 524.9V527.2M334.1 523.5V527.2M335.1 524.9V530.8M336.1 522.3V527.4M337.1 523.2V531.2M338.1 524.4V527.7M339.6 523.3V539.0M340.1 524.9V533.3M340.6 524.9V531.3M341.1 524.9V527.5M341.6 523.4V532.3M342.6 524.9V538.5M344.1 524.9V527.5M344.6 524.9V536.6M345.6 524.2V532.5M346.1 523.3V527.6M346.6 524.9V527.2M347.1 524.9V534.2M348.1 523.1V533.8M350.1 523.7V533.4M353.6 524.9V527.4M354.1 524.3V530.1M354.6 524.9V532.1M356.1 522.7V532.0M357.6 524.9V533.0M360.6 523.7V531.4M361.1 524.3V537.5M361.6 524.2V532.0M363.1 524.9V538.1M363.6 524.9V534.5M364.1 524.9V532.4M364.6 524.9V535.4M365.1 522.1V545.1M366.1 524.9V531.7M367.1 523.2V531.7M370.1 522.5V533.8M371.1 523.5V537.5M372.1 523.1V529.4M372.6 524.9V527.5M374.1 522.2V530.7M376.6 523.2V532.0M377.1 523.6V528.9M378.1 524.9V527.2M379.1 524.9V535.4M380.6 524.9V533.2M382.1 523.3V527.3M383.1 522.3V539.5M383.6 522.5V528.0M384.6 524.3V527.4M385.6 523.0V534.9M386.6 523.2V527.8M388.6 524.9V539.6M389.1 523.4V530.8M390.6 524.9V528.1M393.1 522.7V530.8M394.1 523.8V528.0M395.6 523.3V538.0M397.6 522.4V527.2M398.1 522.3V536.4M400.1 524.9V531.1M401.1 522.1V529.2M401.6 523.0V527.9M402.1 523.7V534.0M403.6 524.9V527.4M404.1 522.9V534.5M404.6 524.9V532.6M405.1 522.6V527.4M407.1 524.1V527.2M408.1 524.9V530.4M409.1 524.9V527.8M413.6 523.3V538.0M415.1 524.9V531.1M417.1 524.9V536.3M421.6 522.7V532.3M422.6 523.7V528.4M423.6 522.9V537.6M424.1 524.9V538.5M426.1 524.2V528.3M427.1 523.5V528.5M429.1 524.9V528.5M429.6 524.9V531.7M431.1 523.6V539.1M432.1 523.8V529.8M432.6 524.9V530.7M433.1 523.6V536.8M433.6 524.9V532.7M436.6 524.9V527.2M437.1 524.9V528.8M438.1 524.9V535.5M439.1 523.5V532.4M441.1 524.3V528.0M441.6 523.6V527.2M445.6 524.2V527.4M446.1 522.4V529.7M446.6 524.3V530.5M447.1 522.2V536.3M448.6 523.2V527.2M449.1 523.2V535.1M449.6 522.6V535.5M450.1 522.2V528.8M452.1 524.2V528.3M454.1 524.9V527.5M455.6 523.8V532.5M456.6 522.9V527.6M457.1 524.9V531.7M457.6 522.5V532.7M458.1 523.5V527.6M458.6 524.9V527.2M460.6 522.1V529.8M461.1 524.9V538.1M461.6 524.9V539.6M462.1 524.9V527.8M463.6 524.9V527.7M464.1 524.9V530.5M466.6 524.9V527.5M470.6 524.9V528.4M472.1 522.7V531.3M474.6 522.3V527.2M475.6 524.9V527.2M476.6 524.9V539.1M477.6 523.3V528.8M479.1 524.9V533.7M479.6 524.9V534.4M481.1 523.2V527.3M482.6 524.9V536.0M483.1 522.2V530.2M483.6 524.9V538.8M486.1 523.3V532.1M488.6 523.9V527.2M490.1 524.9V528.5M492.1 523.7V532.5M492.6 524.9V528.2M493.1 524.9V531.9M493.6 523.0V530.6M495.1 524.9V527.2M497.6 523.4V530.3M499.1 522.6V527.2M500.6 524.9V528.5M503.6 523.7V535.9M504.1 524.9V530.6M505.6 524.9V527.3M506.1 524.9V537.7M507.1 524.9V527.8M509.1 524.9V531.4M509.6 524.9V532.2M510.6 523.4V528.6M511.1 524.9V530.8M513.6 524.9V532.6M516.6 524.9V538.4M517.6 524.9V531.4M518.1 523.2V538.7M519.6 524.9V535.0M521.6 524.9V527.7M524.1 522.6V527.7M525.1 524.9V528.7M525.6 524.9V528.3M526.6 523.3V528.7M527.1 523.9V536.6M528.1 524.1V532.5M530.1 524.9V530.8M530.6 524.9V527.2M532.1 524.9V531.3M533.1 524.3V527.4M533.6 524.4V527.6M536.1 524.9V528.3M538.6 523.1V529.9M539.6 524.9V529.5M541.1 524.9V527.8M543.6 524.9V527.4M547.6 524.9V529.8M548.6 524.9V532.8M549.6 522.3V537.4M550.1 524.9V538.7M551.1 524.9V529.6M553.1 523.4V532.6M553.6 524.9V538.1M555.1 522.7V533.4M555.6 524.9V533.0M557.6 524.9V531.5M558.1 524.3V529.6M559.6 523.7V527.6M560.6 524.9V529.3M562.1 524.9V528.6M563.1 522.7V538.4M563.6 522.9V527.6M564.1 524.9V528.3M566.6 524.9V527.8M567.1 524.9V539.4M567.6 522.7V538.4M568.1 524.9V529.8M568.6 524.9V532.3M569.1 524.1V531.3M569.6 524.9V530.8M570.6 524.9V535.5M571.6 523.7V536.5M572.6 523.3V532.8M573.1 524.9V527.6M573.6 522.4V527.6M574.6 523.9V531.5M575.1 523.4V529.1M575.6 524.9V527.4M576.1 522.4V536.5M578.1 524.2V527.2M580.1 524.1V535.9M580.6 522.4V533.9M581.1 524.9V529.9M582.1 524.9V537.0M583.6 524.9V529.4M584.1 524.9V539.5M585.1 522.4V530.1M586.6 522.6V533.2M588.1 523.9V534.6M589.6 524.9V527.9M590.1 523.9V527.9M591.1 522.9V533.7M592.6 523.8V541.8M593.6 524.9V534.9M595.1 523.6V528.2M595.6 523.2V531.6M596.1 524.0V536.2M596.6 524.0V531.1M597.1 524.9V537.1M600.1 524.1V532.7M602.6 523.7V529.0M603.1 524.9V542.0M604.1 524.9V540.1M604.6 524.9V541.2M605.1 524.9V539.3M605.6 523.5V532.7M606.1 523.0V528.9M606.6 523.4V539.9M609.1 524.9V542.4M610.1 522.6V543.5M610.6 524.3V530.3M611.1 524.9V535.0M612.1 524.9V539.8M613.6 524.9V529.5M614.1 524.9V540.7M614.6 524.9V535.0M616.1 524.9V527.9M616.6 524.9V544.4M620.1 524.9V528.1M620.6 524.9V527.9M622.1 524.9V541.2M623.1 522.9V528.0M624.1 524.9V527.9M625.6 524.9V529.4M626.1 524.9V531.0M628.1 524.9V540.5M629.6 524.9V535.0M633.1 524.0V528.1M633.6 524.9V527.9M634.1 524.3V530.4M634.6 522.3V540.2M636.6 524.9V546.0M637.6 524.9V538.0M638.1 524.1V529.9M638.6 523.4V535.1M639.6 523.1V530.1M642.1 524.9V533.2M642.6 524.9V530.5M643.1 524.9V530.8M644.6 523.3V535.2M645.6 524.3V533.4M647.1 524.9V530.8M648.1 524.0V529.9M648.6 523.4V530.4M649.1 522.5V544.7M649.6 524.9V528.8M651.1 524.9V532.9M652.1 523.8V538.2M653.6 523.3V530.7M655.1 524.2V539.9M656.1 524.9V538.1M657.1 524.9V528.4M657.6 524.9V544.3M659.6 524.9V539.7M660.6 524.9V528.4M662.6 524.9V544.2M666.6 522.2V529.0M667.1 524.9V544.9M667.6 524.9V534.0M668.1 524.9V541.7M672.6 523.6V528.5M673.6 524.9V546.3M674.1 524.9V528.4M674.6 524.9V535.1M677.1 523.7V530.9M677.6 522.6V530.2M679.1 523.2V528.4M680.1 524.9V538.5M682.1 524.2V536.5M683.1 524.9V543.5M684.6 522.6V528.4M685.6 523.2V544.9M686.6 524.9V531.2M688.1 524.9V528.4M690.1 524.9V528.5M690.6 524.9V528.4M694.1 522.5V529.3M694.6 523.1V533.4M695.1 524.9V529.1M696.6 522.1V528.8M697.1 524.4V528.6M697.6 524.9V532.2M698.1 524.1V534.6M698.6 524.9V528.6M701.6 524.9V527.9M705.1 524.9V527.4M705.6 524.9V532.0M707.1 523.9V527.2M707.6 524.9V527.4M708.1 523.0V537.4M710.1 524.1V527.2M711.6 524.9V538.0M712.1 523.5V530.8M712.6 524.9V533.3M713.6 524.9V530.6M714.1 524.9V527.7M715.1 524.9V529.4M715.6 523.9V527.9M716.6 524.9V529.7M717.6 524.9V539.1M718.1 524.9V528.0M719.1 524.9V529.8M720.1 524.9V533.4M720.6 524.9V531.0M721.1 524.9V527.0M721.6 522.2V529.1M722.1 524.0V535.5M722.6 523.2V538.0M723.1 522.2V536.0M723.6 524.9V527.1M725.6 524.9V526.9M727.6 524.9V527.9M728.1 522.8V527.5M729.1 524.9V529.9M729.6 524.9V527.0M731.6 524.9V534.8M732.1 524.9V527.4M734.6 522.1V528.9M736.1 524.1V531.7M737.1 522.6V527.0M737.6 523.1V527.6M738.6 524.9V528.4M739.1 524.9V531.8M739.6 523.5V533.3M741.1 522.6V529.9M742.1 523.0V527.0M743.6 523.9V533.4M744.6 524.2V527.2M745.1 524.9V531.0M745.6 522.5V529.7M746.6 524.2V531.4M747.1 524.9V530.6M748.6 524.9V532.4M750.6 524.9V533.6M751.6 524.9V534.2M753.6 522.2V532.4M754.1 523.7V529.9M754.6 524.9V526.9M756.1 523.8V527.0M756.6 524.9V528.4M640.2 524.9V582.9M644.4 524.9V568.9M323 524.9V566.9M362 524.9V560.9M369.6 524.9V564.9M414.4 524.9V560.9M501.6 524.9V558.9M692 524.9V558.9M693 524.9V552.9M290.6 524.9V542.9M317 524.9V554.9M351 524.9V546.9M388 524.9V548.9M454 524.9V546.9M476 524.9V550.9M517.6 524.9V542.9M593.6 524.9V549.9M664 524.9V550.9M758.4 524.9V546.9M752 524.9V540.9M746 524.9V536.9" stroke="#ef5350" stroke-width="0.6"/><text x="230.8" y="471" font-size="6.5" fill="#222" font-family="Liberation Sans, sans-serif">Delta(Bars, 0.0, True)</text><path d="M836.4 457.24h3.2" stroke="#444" stroke-width="0.7"/><text x="840.2" y="459.84" font-size="6" fill="#333" font-family="Liberation Sans, sans-serif">18380</text><path d="M836.4 439.09h3.2" stroke="#444" stroke-width="0.7"/><text x="840.2" y="441.69" font-size="6" fill="#333" font-family="Liberation Sans, sans-serif">18400</text><path d="M836.4 420.95h3.2" stroke="#444" stroke-width="0.7"/><text x="840.2" y="423.55" font-size="6" fill="#333" font-family="Liberation Sans, sans-serif">18420</text><path d="M836.4 402.80h3.2" stroke="#444" stroke-width="0.7"/><text x="840.2" y="405.40" font-size="6" fill="#333" font-family="Liberation Sans, sans-serif">18440</text><path d="M836.4 384.66h3.2" stroke="#444" stroke-width="0.7"/><text x="840.2" y="387.26" font-size="6" fill="#333" font-family="Liberation Sans, sans-serif">18460</text><path d="M836.4 366.52h3.2" stroke="#444" stroke-width="0.7"/><text x="840.2" y="369.12" font-size="6" fill="#333" font-family="Liberation Sans, sans-serif">18480</text><path d="M836.4 348.37h3.2" stroke="#444" stroke-width="0.7"/><text x="840.2" y="350.97" font-size="6" fill="#333" font-family="Liberation Sans, sans-serif">18500</text><path d="M836.4 330.23h3.2" stroke="#444" stroke-width="0.7"/><text x="840.2" y="332.83" font-size="6" fill="#333" font-family="Liberation Sans, sans-serif">18520</text><path d="M836.4 312.08h3.2" stroke="#444" stroke-width="0.7"/><text x="840.2" y="314.68" font-size="6" fill="#333" font-family="Liberation Sans, sans-serif">18540</text><path d="M836.4 293.94h3.2" stroke="#444" stroke-width="0.7"/><text x="840.2" y="296.54" font-size="6" fill="#333" font-family="Liberation Sans, sans-serif">18560</text><path d="M836.4 275.80h3.2" stroke="#444" stroke-width="0.7"/><text x="840.2" y="278.40" font-size="6" fill="#333" font-family="Liberation Sans, sans-serif">18580</text><path d="M836.4 257.65h3.2" stroke="#444" stroke-width="0.7"/><text x="840.2" y="260.25" font-size="6" fill="#333" font-family="Liberation Sans, sans-serif">18600</text><path d="M836.4 239.51h3.2" stroke="#444" stroke-width="0.7"/><text x="840.2" y="242.11" font-size="6" fill="#333" font-family="Liberation Sans, sans-serif">18620</text><path d="M836.4 221.36h3.2" stroke="#444" stroke-width="0.7"/><text x="840.2" y="223.96" font-size="6" fill="#333" font-family="Liberation Sans, sans-serif">18640</text><path d="M836.4 203.22h3.2" stroke="#444" stroke-width="0.7"/><text x="840.2" y="205.82" font-size="6" fill="#333" font-family="Liberation Sans, sans-serif">18660</text><path d="M836.4 185.08h3.2" stroke="#444" stroke-width="0.7"/><text x="840.2" y="187.68" font-size="6" fill="#333" font-family="Liberation Sans, sans-serif">18680</text><path d="M836.4 166.93h3.2" stroke="#444" stroke-width="0.7"/><text x="840.2" y="169.53" font-size="6" fill="#333" font-family="Liberation Sans, sans-serif">18700</text><path d="M836.4 148.79h3.2" stroke="#444" stroke-width="0.7"/><text x="840.2" y="151.39" font-size="6" fill="#333" font-family="Liberation Sans, sans-serif">18720</text><path d="M836.4 130.64h3.2" stroke="#444" stroke-width="0.7"/><text x="840.2" y="133.24" font-size="6" fill="#333" font-family="Liberation Sans, sans-serif">18740</text><path d="M836.4 112.50h3.2" stroke="#444" stroke-width="0.7"/><text x="840.2" y="115.10" font-size="6" fill="#333" font-family="Liberation Sans, sans-serif">18760</text><text x="835.6" y="206.4" font-size="6" fill="#555" text-anchor="end" font-family="Liberation Sans, sans-serif">vPOC</text><path d="M837.4 207.9l3-3.6h19.8v7.2h-19.8z" fill="#c58fd0"/><text x="840.4" y="210.1" font-size="6" fill="#5d2a6d" font-family="Liberation Sans, sans-serif">18655</text><path d="M837.4 348.4l3-3.6h19.8v7.2h-19.8z" fill="#111"/><text x="840.4" y="350.6" font-size="6" fill="#fff" font-family="Liberation Sans, sans-serif">18500</text><text x="840.4" y="469.09999999999997" font-size="6" fill="#333" font-family="Liberation Sans, sans-serif">165</text><text x="840.4" y="527.1" font-size="6" fill="#333" font-family="Liberation Sans, sans-serif">0</text><text x="840.4" y="588.6" font-size="6" fill="#333" font-family="Liberation Sans, sans-serif">-164</text><path d="M836.4 524.9h2.6M836.4 586.6h2.6" stroke="#555" stroke-width="0.7"/><path d="M837.4 548.6l3-3.4h13.6v6.8h-13.6z" fill="#ef5350"/><text x="841" y="550.8" font-size="6" fill="#fff" font-family="Liberation Sans, sans-serif">-63</text><path d="M276 587.6v2" stroke="#555" stroke-width="0.7"/><text x="274.6" y="596.3" font-size="6.2" fill="#333" text-anchor="middle" font-family="Liberation Sans, sans-serif">00:15:01</text><path d="M332.3 587.6v2" stroke="#555" stroke-width="0.7"/><text x="330.90000000000003" y="596.3" font-size="6.2" fill="#333" text-anchor="middle" font-family="Liberation Sans, sans-serif">07:34:04</text><path d="M388.5 587.6v2" stroke="#555" stroke-width="0.7"/><text x="387.1" y="596.3" font-size="6.2" fill="#333" text-anchor="middle" font-family="Liberation Sans, sans-serif">10:51:41</text><path d="M444.6 587.6v2" stroke="#555" stroke-width="0.7"/><text x="443.20000000000005" y="596.3" font-size="6.2" fill="#333" text-anchor="middle" font-family="Liberation Sans, sans-serif">14:10:51</text><path d="M500.9 587.6v2" stroke="#555" stroke-width="0.7"/><text x="499.5" y="596.3" font-size="6.2" fill="#333" text-anchor="middle" font-family="Liberation Sans, sans-serif">17:20:54</text><path d="M557.1 587.6v2" stroke="#555" stroke-width="0.7"/><text x="555.7" y="596.3" font-size="6.2" fill="#333" text-anchor="middle" font-family="Liberation Sans, sans-serif">07:23:03</text><path d="M613.3 587.6v2" stroke="#555" stroke-width="0.7"/><text x="611.9" y="596.3" font-size="6.2" fill="#333" text-anchor="middle" font-family="Liberation Sans, sans-serif">09:46:07</text><path d="M669.6 587.6v2" stroke="#555" stroke-width="0.7"/><text x="668.2" y="596.3" font-size="6.2" fill="#333" text-anchor="middle" font-family="Liberation Sans, sans-serif">13:52:20</text><path d="M725.8 587.6v2" stroke="#555" stroke-width="0.7"/><text x="724.4" y="596.3" font-size="6.2" fill="#333" text-anchor="middle" font-family="Liberation Sans, sans-serif">16:43:24</text><rect x="817" y="105.8" width="8.8" height="9.4" fill="#fff" stroke="#555" stroke-width="0.7"/><path d="M819 107.8l4 2.7l-4 2.700000000000001z" fill="#111"/><path d="M823.6 107.8v5.4" stroke="#111" stroke-width="1"/><rect x="857.6" y="105.6" width="4.6" height="4.6" fill="#fff" stroke="#555" stroke-width="0.6"/><path d="M858.6 109.2l2.600000000000001-2.6" stroke="#555" stroke-width="0.6"/></svg>
<div class="a " style="left:228.2px;top:599.6px;width:799.4px;height:12.0px;background:#f3f3f6"></div>
<svg class="a" style="left:231.60px;top:603.60px;" width="2.4" height="4" viewBox="0 0 2.4 4"><path d="M2.4 0v4L0 2z" fill="#222"/></svg>
<div class="a " style="left:807.6px;top:601.8px;width:3.6px;height:7.6px;background:#c9c9d3"></div>
<svg class="a" style="left:815.40px;top:603.60px;" width="2.4" height="4" viewBox="0 0 2.4 4"><path d="M0 0v4L2.4 2z" fill="#222"/></svg>
<div class="a" style="top:601.46px;height:8.68px;line-height:8.68px;font-size:6.2px;color:#333;white-space:pre;left:824.30px;">DOM Trader</div>
<div class="a " style="left:226.6px;top:611.3px;width:802.0px;height:2.0px;background:#1f83d6"></div>
<div class="a " style="left:227.4px;top:613.2px;width:801.2px;height:13.5px;background:#eeeef3;border:0.9px solid #9cc6ec;border-top:none"></div>
<div class="a" style="top:615.66px;height:8.68px;line-height:8.68px;font-size:6.2px;color:#333;white-space:pre;left:230.80px;">Orders</div>
<div class="a" style="top:615.66px;height:8.68px;line-height:8.68px;font-size:6.2px;color:#333;white-space:pre;left:257.00px;">Trades</div>
<div class="a" style="top:615.66px;height:8.68px;line-height:8.68px;font-size:6.2px;color:#333;white-space:pre;left:281.70px;">Positions - Active</div>
<div class="a" style="top:615.66px;height:8.68px;line-height:8.68px;font-size:6.2px;color:#333;white-space:pre;left:336.50px;">Accounts</div>
<div class="a" style="top:615.66px;height:8.68px;line-height:8.68px;font-size:6.2px;color:#333;white-space:pre;left:369.20px;">Statistics</div>
<div class="a" style="top:615.66px;height:8.68px;line-height:8.68px;font-size:6.2px;color:#333;white-space:pre;left:400.60px;">Trading strategies</div>
<div class="a " style="left:454.8px;top:613.2px;width:100.6px;height:11.8px;background:#0a78d2"></div>
<div class="a" style="top:615.70px;height:8.61px;line-height:8.61px;font-size:6.15px;color:#fff;white-space:pre;left:459.00px;">FDAX 4 Range X chart (Historical)</div>
<div class="a " style="left:556.0px;top:613.6px;width:21.0px;height:11.2px;background:#f6f6f9"></div>
<svg class="a" style="left:562.40px;top:615.80px;" width="7.6" height="7.6" viewBox="0 0 7.6 7.6"><path d="M3.8 0v7.6M0 3.8h7.6" stroke="#222" stroke-width="0.8"/></svg>
<div class="a " style="left:863.8px;top:104.8px;width:3.6px;height:494.8px;background:#f6f6f9;border-left:0.7px solid #cfcfd8;border-right:0.7px solid #dcdce4"></div>
<div class="a " style="left:867.4px;top:104.8px;width:160.2px;height:494.8px;background:#eeeef3"></div>
<div class="a " style="left:873.2px;top:110.8px;width:72.2px;height:18.5px;background:#5c75a9;border-radius:1.6px"></div>
<div class="a " style="left:949.6px;top:110.8px;width:71.6px;height:18.5px;background:#8c3337;border-radius:1.6px"></div>
<div class="a" style="top:115.68px;height:9.24px;line-height:9.24px;font-size:6.6px;color:#fff;white-space:pre;left:874.30px;width:70px;text-align:center;">BUY MARKET</div>
<div class="a" style="top:115.68px;height:9.24px;line-height:9.24px;font-size:6.6px;color:#fff;white-space:pre;left:950.40px;width:70px;text-align:center;">SELL MARKET</div>
<div class="a " style="left:873.2px;top:133.5px;width:72.2px;height:18.5px;background:#5c75a9;border-radius:1.6px"></div>
<div class="a " style="left:949.6px;top:133.5px;width:71.6px;height:18.5px;background:#8c3337;border-radius:1.6px"></div>
<div class="a" style="top:138.38px;height:9.24px;line-height:9.24px;font-size:6.6px;color:#fff;white-space:pre;left:874.30px;width:70px;text-align:center;">BUY ASK</div>
<div class="a" style="top:138.38px;height:9.24px;line-height:9.24px;font-size:6.6px;color:#fff;white-space:pre;left:950.40px;width:70px;text-align:center;">SELL ASK</div>
<div class="a " style="left:873.2px;top:156.2px;width:72.2px;height:18.5px;background:#5c75a9;border-radius:1.6px"></div>
<div class="a " style="left:949.6px;top:156.2px;width:71.6px;height:18.5px;background:#8c3337;border-radius:1.6px"></div>
<div class="a" style="top:161.08px;height:9.24px;line-height:9.24px;font-size:6.6px;color:#fff;white-space:pre;left:874.30px;width:70px;text-align:center;">BUY BID</div>
<div class="a" style="top:161.08px;height:9.24px;line-height:9.24px;font-size:6.6px;color:#fff;white-space:pre;left:950.40px;width:70px;text-align:center;">SELL BID</div>
<div class="a " style="left:873.2px;top:178.9px;width:72.2px;height:18.5px;background:#f4f4f7;border-radius:1.6px"></div>
<div class="a " style="left:949.6px;top:178.9px;width:71.6px;height:18.5px;background:#f4f4f7;border-radius:1.6px"></div>
<div class="a" style="top:183.78px;height:9.24px;line-height:9.24px;font-size:6.6px;color:#222;white-space:pre;left:874.30px;width:70px;text-align:center;">Cancel Bids</div>
<div class="a" style="top:183.78px;height:9.24px;line-height:9.24px;font-size:6.6px;color:#222;white-space:pre;left:950.40px;width:70px;text-align:center;">Cancel Bids</div>
<div class="a " style="left:873.2px;top:201.6px;width:72.2px;height:18.5px;background:#f4f4f7;border-radius:1.6px"></div>
<div class="a " style="left:949.6px;top:201.6px;width:71.6px;height:18.5px;background:#f4f4f7;border-radius:1.6px"></div>
<div class="a" style="top:206.48px;height:9.24px;line-height:9.24px;font-size:6.6px;color:#222;white-space:pre;left:874.30px;width:70px;text-align:center;">Cancel All</div>
<div class="a" style="top:206.48px;height:9.24px;line-height:9.24px;font-size:6.6px;color:#222;white-space:pre;left:950.40px;width:70px;text-align:center;">Reverse</div>
<div class="a " style="left:873.2px;top:224.3px;width:148.0px;height:18.5px;background:#2f7d3b;border-radius:1.6px"></div>
<div class="a" style="top:229.08px;height:9.24px;line-height:9.24px;font-size:6.6px;color:#fff;white-space:pre;left:912.20px;width:70px;text-align:center;">Close</div>
<div class="a " style="left:873.2px;top:257.5px;width:148.0px;height:11.4px;border:0.7px solid #dcdce4;border-radius:1.6px;background:#efeff4"></div>
<div class="a" style="top:258.92px;height:8.96px;line-height:8.96px;font-size:6.4px;color:#444;white-space:pre;left:927.20px;width:40px;text-align:center;">PnL</div>
<div class="a " style="left:873.2px;top:274.2px;width:72.2px;height:12.0px;border:0.7px solid #dcdce4;border-radius:1.6px;background:#efeff4"></div>
<div class="a " style="left:949.6px;top:274.2px;width:71.6px;height:12.0px;border:0.7px solid #dcdce4;border-radius:1.6px;background:#efeff4"></div>
<div class="a" style="top:276.72px;height:8.96px;line-height:8.96px;font-size:6.4px;color:#444;white-space:pre;left:889.30px;width:40px;text-align:center;">Flat</div>
<div class="a" style="top:276.72px;height:8.96px;line-height:8.96px;font-size:6.4px;color:#444;white-space:pre;left:965.40px;width:40px;text-align:center;">Entry</div>
<div class="a" style="top:299.74px;height:8.12px;line-height:8.12px;font-size:5.8px;color:#999;white-space:pre;left:873.20px;">Account</div>
<div class="a" style="top:299.74px;height:8.12px;line-height:8.12px;font-size:5.8px;color:#999;white-space:pre;left:973.40px;">Qty</div>
<div class="a " style="left:873.2px;top:312.4px;width:95.2px;height:13.6px;background:#fff;border-radius:1.5px"></div>
<div class="a" style="top:315.05px;height:9.10px;line-height:9.10px;font-size:6.5px;color:#222;white-space:pre;left:877.40px;">Replay</div>
<svg class="a" style="left:961.25px;top:318.25px;" width="3.9099999999999997" height="2.3" viewBox="0 0 3.9099999999999997 2.3"><path d="M0 0 h3.9099999999999997 l-1.9549999999999998 2.3z" fill="#222"/></svg>
<div class="a " style="left:973.8px;top:312.4px;width:47.4px;height:13.6px;background:#fff;border-radius:1.5px"></div>
<div class="a" style="top:315.05px;height:9.10px;line-height:9.10px;font-size:6.5px;color:#222;white-space:pre;left:989.60px;width:20px;text-align:right;">1</div>
<svg class="a" style="left:1013.84px;top:318.25px;" width="3.9099999999999997" height="2.3" viewBox="0 0 3.9099999999999997 2.3"><path d="M0 0 h3.9099999999999997 l-1.9549999999999998 2.3z" fill="#222"/></svg>
<div class="a " style="left:873.8px;top:336.2px;width:13.8px;height:6.8px;background:#333;border-radius:3.4px"></div>
<div class="a " style="left:874.7px;top:337.1px;width:5.0px;height:5.0px;background:#fff;border-radius:50%"></div>
<div class="a" style="top:335.18px;height:9.24px;line-height:9.24px;font-size:6.6px;color:#222;white-space:pre;left:892.60px;">OCO</div>
<div class="a " style="left:973.8px;top:332.4px;width:47.4px;height:13.6px;background:#fff;border-radius:1.5px"></div>
<div class="a" style="top:335.05px;height:9.10px;line-height:9.10px;font-size:6.5px;color:#222;white-space:pre;left:977.60px;">GTC</div>
<svg class="a" style="left:1013.84px;top:338.25px;" width="3.9099999999999997" height="2.3" viewBox="0 0 3.9099999999999997 2.3"><path d="M0 0 h3.9099999999999997 l-1.9549999999999998 2.3z" fill="#222"/></svg>
<div class="a " style="left:873.2px;top:359.3px;width:148.0px;height:0.8px;background:#dcdce4"></div>
<div class="a" style="top:373.76px;height:10.08px;line-height:10.08px;font-size:7.2px;color:#111;white-space:pre;font-weight:bold;left:873.20px;">SL/TP</div>
<div class="a" style="top:388.18px;height:7.84px;line-height:7.84px;font-size:5.6px;color:#333;white-space:pre;left:873.20px;"><b style="color:#d32020">SL:</b> 10T</div>
<div class="a" style="top:388.18px;height:7.84px;line-height:7.84px;font-size:5.6px;color:#333;white-space:pre;left:961.20px;width:60px;text-align:right;"><b style="color:#2a8a2a">TP:</b> 10T</div>
<div class="a" style="top:401.48px;height:7.84px;line-height:7.84px;font-size:5.6px;color:#222;white-space:pre;font-weight:bold;left:873.20px;">Breakeven:</div>
<div class="a" style="top:401.48px;height:7.84px;line-height:7.84px;font-size:5.6px;color:#333;white-space:pre;left:961.20px;width:60px;text-align:right;">5/1T</div>
<div class="a" style="top:414.28px;height:7.84px;line-height:7.84px;font-size:5.6px;color:#222;white-space:pre;font-weight:bold;left:873.20px;">Trailing:</div>
<div class="a" style="top:414.28px;height:7.84px;line-height:7.84px;font-size:5.6px;color:#333;white-space:pre;left:961.20px;width:60px;text-align:right;">5/10T</div>
<div class="a " style="left:873.2px;top:426.5px;width:148.0px;height:11.9px;background:#0a78d2;border-radius:1.6px"></div>
<div class="a" style="top:429.01px;height:7.98px;line-height:7.98px;font-size:5.7px;color:#fff;white-space:pre;left:912.20px;width:70px;text-align:center;">Edit strategy</div>
<div class="a " style="left:873.2px;top:451.3px;width:148.0px;height:0.8px;background:#dcdce4"></div>
<div class="a " style="left:873.8px;top:466.4px;width:13.8px;height:6.8px;background:#333;border-radius:3.4px"></div>
<div class="a " style="left:874.7px;top:467.3px;width:5.0px;height:5.0px;background:#fff;border-radius:50%"></div>
<div class="a" style="top:465.52px;height:8.96px;line-height:8.96px;font-size:6.4px;color:#222;white-space:pre;left:892.50px;">Trading from chart</div>
<div class="a" style="top:601.96px;height:8.68px;line-height:8.68px;font-size:6.2px;color:#333;white-space:pre;left:980.00px;">Chart Trader</div>
<svg class="a" style="left:1018.30px;top:603.70px;" width="4.2" height="4.2" viewBox="0 0 4.2 4.2"><path d="M0 0L4.2 4.2M4.2 0L0 4.2" stroke="#222" stroke-width="0.9"/></svg>
<svg class="a" style="left:0;top:0" width="1030" height="643" viewBox="0 0 1030 643"><path d="M42.6 84.8L30 90.9" stroke="#f01414" stroke-width="1.1"/><path d="M27.4 92.1l5.2-0.4l-2-3.9z" fill="#f01414"/><path d="M180.2 530.6L187 596" stroke="#f01414" stroke-width="1.1"/><path d="M187.6 601.6l-2.7-6l4.6-0.5z" fill="#f01414"/><rect x="6.4" y="107" width="214.2" height="145.4" rx="1.8" fill="none" stroke="#f51010" stroke-width="1.3"/><circle cx="28.8" cy="49.8" r="8.3" fill="#fb9618" stroke="#151515" stroke-width="1.1"/><text x="28.8" y="53.4" font-size="10.2" font-weight="bold" text-anchor="middle" fill="#111" font-family="Liberation Sans, sans-serif">1</text><circle cx="461.5" cy="44.9" r="8.3" fill="#fb9618" stroke="#151515" stroke-width="1.1"/><text x="461.5" y="48.5" font-size="10.2" font-weight="bold" text-anchor="middle" fill="#111" font-family="Liberation Sans, sans-serif">2</text><circle cx="49.5" cy="80.9" r="8.3" fill="#fb9618" stroke="#151515" stroke-width="1.1"/><text x="49.5" y="84.5" font-size="10.2" font-weight="bold" text-anchor="middle" fill="#111" font-family="Liberation Sans, sans-serif">3</text><circle cx="102" cy="107.5" r="8.3" fill="#fb9618" stroke="#151515" stroke-width="1.1"/><text x="102" y="111.1" font-size="10.2" font-weight="bold" text-anchor="middle" fill="#111" font-family="Liberation Sans, sans-serif">4</text><circle cx="179.4" cy="522.3" r="8.3" fill="#fb9618" stroke="#151515" stroke-width="1.1"/><text x="179.4" y="525.9" font-size="10.2" font-weight="bold" text-anchor="middle" fill="#111" font-family="Liberation Sans, sans-serif">5</text></svg>
</div></body></html>
